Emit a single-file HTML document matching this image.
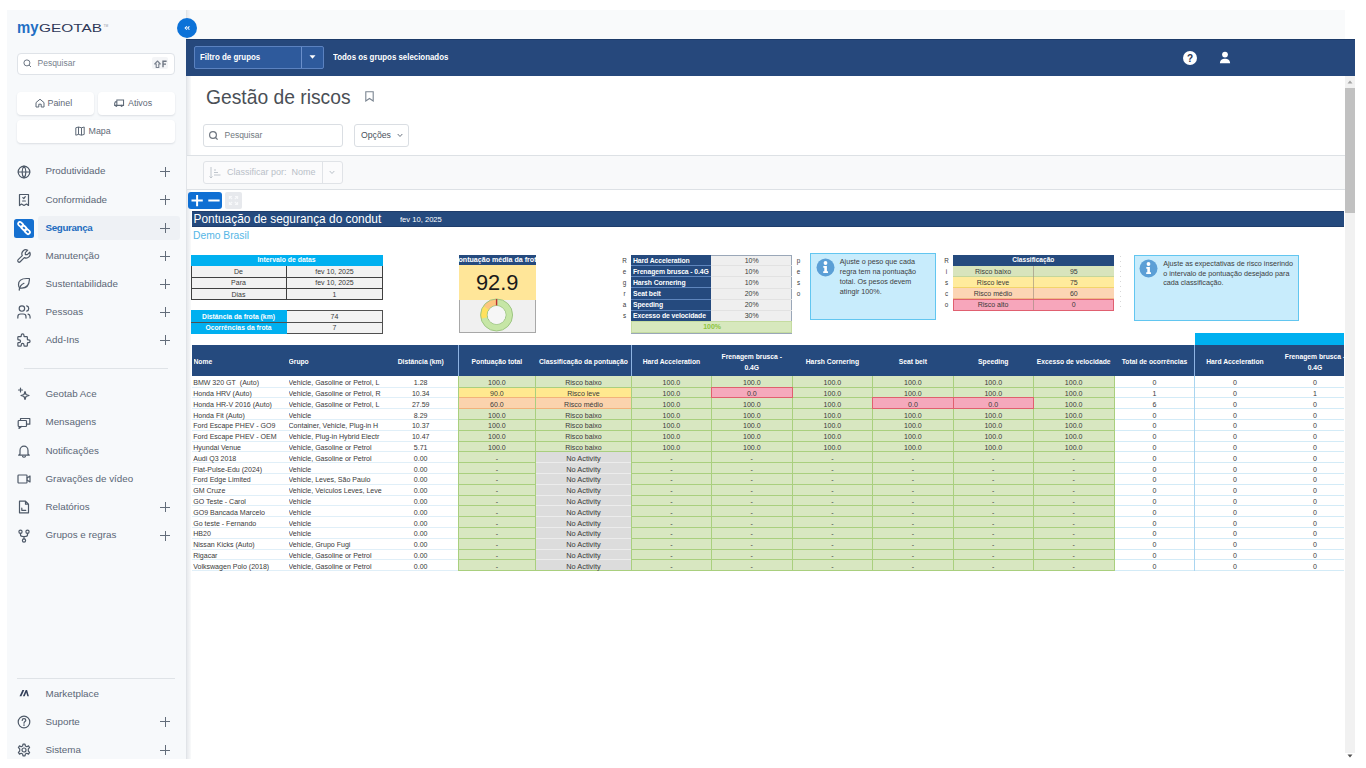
<!DOCTYPE html><html><head><meta charset="utf-8"><style>
*{box-sizing:border-box;margin:0;padding:0}
html,body{width:1366px;height:768px;overflow:hidden;background:#fff;font-family:"Liberation Sans",sans-serif}
body{position:relative}
.a{position:absolute}
.nt{position:absolute;left:45.5px;font-size:9.8px;color:#5a6676;white-space:nowrap;line-height:12px}
.pl{position:absolute;left:160px;width:10px;height:10px}
.pl:before{content:"";position:absolute;left:4.5px;top:0;width:1.1px;height:10px;background:#636d7a}
.pl:after{content:"";position:absolute;left:0;top:4.5px;width:10px;height:1.1px;background:#636d7a}
.ic{position:absolute;left:17px;width:14px;height:14px;overflow:visible}
.sbb{position:absolute;background:#fff;border-radius:4px;box-shadow:0 1px 2px rgba(40,50,70,.13);color:#5f6a78;font-size:8.9px;white-space:nowrap}
</style></head><body>
<div class="a" style="left:7px;top:10px;width:179px;height:749px;background:#f7f9fb"></div>
<div class="a" style="left:186px;top:10px;width:1px;height:749px;background:#e1e4e8"></div>
<div class="a" style="left:187px;top:10px;width:4px;height:749px;background:linear-gradient(to right,#e8eaed,#f9fafb)"></div>
<div class="a" style="left:16.8px;top:17.5px;font-size:16px;font-weight:700;color:#1f6fc4;line-height:20px;transform:scaleX(0.93);transform-origin:0 0">my</div>
<svg class="a" style="left:39px;top:21px" width="70" height="14"><text x="0" y="11.3" font-family="Liberation Sans" font-size="11.6" fill="#2e3858" textLength="63" lengthAdjust="spacingAndGlyphs">GEOTAB</text><text x="64.5" y="5.5" font-family="Liberation Sans" font-size="3.2" fill="#9096a5">TM</text></svg>
<div class="a" style="left:17px;top:52.5px;width:157.5px;height:22px;background:#fff;border:1px solid #dfe3e8;border-radius:4px"></div>
<svg class="a" style="left:23px;top:59px" width="9" height="9" viewBox="0 0 9 9"><circle cx="3.9" cy="3.9" r="3" fill="none" stroke="#6b7583" stroke-width="1"/><line x1="6.1" y1="6.1" x2="8" y2="8" stroke="#6b7583" stroke-width="1"/></svg>
<div class="a" style="left:37.5px;top:58px;font-size:8.5px;color:#77818d;line-height:11px">Pesquisar</div>
<div class="a" style="left:151.5px;top:56.5px;width:16.5px;height:12.3px;background:#f4f5f7;border-radius:2px"></div>
<svg class="a" style="left:153.5px;top:59.5px" width="14" height="9" viewBox="0 0 14 9"><path d="M3.5 1 L6.3 4 H4.8 V7.5 H2.2 V4 H0.7 Z" fill="none" stroke="#7b8390" stroke-width="1.1" stroke-linejoin="round"/><path d="M9 7.3 V1.2 H12.6 M9 4.1 H12" fill="none" stroke="#6f7783" stroke-width="1.4"/></svg>
<div class="sbb" style="left:17px;top:92px;width:77px;height:22.5px"></div>
<div class="sbb" style="left:97.5px;top:92px;width:77px;height:22.5px"></div>
<div class="sbb" style="left:17px;top:120px;width:157.5px;height:22.5px"></div>
<svg class="a" style="left:35px;top:98px" width="10" height="10" viewBox="0 0 10 10"><path d="M1 4.6 L5 1.2 L9 4.6 V9 H6.2 V6.2 H3.8 V9 H1 Z" fill="none" stroke="#5f6a78" stroke-width="1"/></svg>
<div class="a" style="left:47.5px;top:97.5px;font-size:8.9px;color:#5f6a78;line-height:11px">Painel</div>
<svg class="a" style="left:114px;top:98px" width="10.5" height="10" viewBox="0 0 11 10"><g transform="translate(11 0) scale(-1 1)"><path d="M1 1.8 H8 V7.5 H1 Z M8 3.8 H9.6 L10.3 5.4 V7.5 H8" fill="none" stroke="#5f6a78" stroke-width="1.1"/><circle cx="3" cy="8" r="1.2" fill="#5f6a78"/><circle cx="8.6" cy="8" r="1.2" fill="#5f6a78"/></g></svg>
<div class="a" style="left:128px;top:97.5px;font-size:8.9px;color:#5f6a78;line-height:11px">Ativos</div>
<svg class="a" style="left:75px;top:126px" width="10" height="10" viewBox="0 0 10 10"><path d="M0.8 1.8 L3.5 1 L6.5 1.8 L9.2 1 V8.4 L6.5 9.2 L3.5 8.4 L0.8 9.2 Z M3.5 1 V8.4 M6.5 1.8 V9.2" fill="none" stroke="#5f6a78" stroke-width="1"/></svg>
<div class="a" style="left:88.5px;top:125.5px;font-size:8.9px;color:#5f6a78;line-height:11px">Mapa</div>
<div class="nt" style="top:165.39999999999998px;color:#5a6676;font-weight:400;">Produtividade</div>
<svg class="ic" style="top:164.7px" viewBox="0 0 14 14"><circle cx="7" cy="7" r="5.8" fill="none" stroke="#4e5968" stroke-width="1.2" stroke-linecap="round" stroke-linejoin="round"/><path d="M1.2 7 H12.8 M7 1.2 C4.5 4 4.5 10 7 12.8 M7 1.2 C9.5 4 9.5 10 7 12.8" fill="none" stroke="#4e5968" stroke-width="1.2" stroke-linecap="round" stroke-linejoin="round"/></svg>
<div class="pl" style="top:166.7px"></div>
<div class="nt" style="top:193.5px;color:#5a6676;font-weight:400;">Conformidade</div>
<svg class="ic" style="top:192.8px" viewBox="0 0 14 14"><path d="M2.5 1.5 H11.5 V12.5 L9.5 11 L7 12.5 L4.5 11 L2.5 12.5 Z" fill="none" stroke="#4e5968" stroke-width="1.2" stroke-linecap="round" stroke-linejoin="round"/><path d="M5.8 4.6 L6.8 5.5 L8.3 3.7 M5.6 8 H8.4" fill="none" stroke="#4e5968" stroke-width="1.2" stroke-linecap="round" stroke-linejoin="round"/></svg>
<div class="pl" style="top:194.8px"></div>
<div class="a" style="left:37.5px;top:216.3px;width:142px;height:24px;background:#eef1f5;border-radius:3px"></div>
<div class="a" style="left:14px;top:218.8px;width:19.5px;height:19.5px;background:#1570d0;border-radius:2.5px"></div>
<div class="nt" style="top:222.0px;color:#1d6cc0;font-weight:700;letter-spacing:-0.35px;">Segurança</div>
<svg class="ic" style="top:221.3px" viewBox="0 0 14 14"><g fill="none" stroke="#fff" stroke-width="1.8"><rect x="0.8" y="1.6" width="5.6" height="3.6" rx="1.8" transform="rotate(42 3.6 3.4)"/><rect x="4.2" y="5.2" width="5.6" height="3.6" rx="1.8" transform="rotate(42 7 7)"/><rect x="7.6" y="8.8" width="5.6" height="3.6" rx="1.8" transform="rotate(42 10.4 10.6)"/></g></svg>
<div class="pl" style="top:223.3px"></div>
<div class="nt" style="top:249.7px;color:#5a6676;font-weight:400;">Manutenção</div>
<svg class="ic" style="top:249px" viewBox="0 0 14 14"><g transform="translate(-1.2 -1.2) scale(0.68)"><path d="M17 10h-3v-3l3.5 -3.5a6 6 0 0 0 -8 8l-6 6a2 2 0 0 0 3 3l6 -6a6 6 0 0 0 8 -8l-3.5 3.5" fill="none" stroke="#4e5968" stroke-width="1.75" stroke-linecap="round" stroke-linejoin="round"/></g></svg>
<div class="pl" style="top:251px"></div>
<div class="nt" style="top:277.9px;color:#5a6676;font-weight:400;">Sustentabilidade</div>
<svg class="ic" style="top:277.2px" viewBox="0 0 14 14"><g transform="translate(-1.2 -1.2) scale(0.68)"><path d="M5 21c.5 -4.5 2.5 -8 7 -10" fill="none" stroke="#4e5968" stroke-width="1.75" stroke-linecap="round" stroke-linejoin="round"/><path d="M9 18c6.218 0 10.5 -3.288 11 -12v-2h-4.014c-9 0 -11.986 4 -12 9c0 1 0 3 2 5h3z" fill="none" stroke="#4e5968" stroke-width="1.75" stroke-linecap="round" stroke-linejoin="round"/></g></svg>
<div class="pl" style="top:279.2px"></div>
<div class="nt" style="top:305.9px;color:#5a6676;font-weight:400;">Pessoas</div>
<svg class="ic" style="top:305.2px" viewBox="0 0 14 14"><g transform="translate(-1.2 -1.2) scale(0.68)"><circle cx="9" cy="7" r="4" fill="none" stroke="#4e5968" stroke-width="1.75" stroke-linecap="round" stroke-linejoin="round"/><path d="M3 21v-2a4 4 0 0 1 4 -4h4a4 4 0 0 1 4 4v2" fill="none" stroke="#4e5968" stroke-width="1.75" stroke-linecap="round" stroke-linejoin="round"/><path d="M16 3.13a4 4 0 0 1 0 7.75" fill="none" stroke="#4e5968" stroke-width="1.75" stroke-linecap="round" stroke-linejoin="round"/><path d="M21 21v-2a4 4 0 0 0 -3 -3.85" fill="none" stroke="#4e5968" stroke-width="1.75" stroke-linecap="round" stroke-linejoin="round"/></g></svg>
<div class="pl" style="top:307.2px"></div>
<div class="nt" style="top:334.09999999999997px;color:#5a6676;font-weight:400;">Add-Ins</div>
<svg class="ic" style="top:333.4px" viewBox="0 0 14 14"><g transform="translate(-1.2 -1.2) scale(0.68)"><path d="M4 7h3a1 1 0 0 0 1 -1v-1a2 2 0 0 1 4 0v1a1 1 0 0 0 1 1h3a1 1 0 0 1 1 1v3a1 1 0 0 0 1 1h1a2 2 0 0 1 0 4h-1a1 1 0 0 0 -1 1v3a1 1 0 0 1 -1 1h-3a1 1 0 0 1 -1 -1v-1a2 2 0 0 0 -4 0v1a1 1 0 0 1 -1 1h-3a1 1 0 0 1 -1 -1v-3a1 1 0 0 1 1 -1h1a2 2 0 0 0 0 -4h-1a1 1 0 0 1 -1 -1v-3a1 1 0 0 1 1 -1" fill="none" stroke="#4e5968" stroke-width="1.75" stroke-linecap="round" stroke-linejoin="round"/></g></svg>
<div class="pl" style="top:335.4px"></div>
<div class="a" style="left:24px;top:368px;width:144px;height:1px;background:#dfe3e7"></div>
<div class="nt" style="top:388.09999999999997px;color:#5a6676;font-weight:400;">Geotab Ace</div>
<svg class="ic" style="top:387.4px" viewBox="0 0 14 14"><path d="M8 4.5 L9 7.5 L12 8.5 L9 9.5 L8 12.5 L7 9.5 L4 8.5 L7 7.5 Z" fill="none" stroke="#4e5968" stroke-width="1.2" stroke-linecap="round" stroke-linejoin="round"/><path d="M3.5 1 V5 M1.5 3 H5.5" fill="none" stroke="#4e5968" stroke-width="1.2" stroke-linecap="round" stroke-linejoin="round"/></svg>
<div class="nt" style="top:416.4px;color:#5a6676;font-weight:400;">Mensagens</div>
<svg class="ic" style="top:415.7px" viewBox="0 0 14 14"><rect x="1.2" y="4.5" width="8.3" height="6" rx="0.8" fill="none" stroke="#4e5968" stroke-width="1.2" stroke-linecap="round" stroke-linejoin="round"/><path d="M3.5 4.5 V2.5 H12.8 V8.2 H9.5 M2.5 10.5 L2 12.5 L4.5 10.5" fill="none" stroke="#4e5968" stroke-width="1.2" stroke-linecap="round" stroke-linejoin="round"/></svg>
<div class="nt" style="top:444.7px;color:#5a6676;font-weight:400;">Notificações</div>
<svg class="ic" style="top:444px" viewBox="0 0 14 14"><path d="M3 10 V6.5 C3 4 4.8 2.2 7 2.2 C9.2 2.2 11 4 11 6.5 V10 L12.3 11.2 H1.7 Z M5.6 12.5 C6 13.3 8 13.3 8.4 12.5" fill="none" stroke="#4e5968" stroke-width="1.2" stroke-linecap="round" stroke-linejoin="round"/></svg>
<div class="nt" style="top:472.7px;color:#5a6676;font-weight:400;">Gravações de vídeo</div>
<svg class="ic" style="top:472px" viewBox="0 0 14 14"><rect x="1" y="3" width="9" height="8" rx="0.8" fill="none" stroke="#4e5968" stroke-width="1.2" stroke-linecap="round" stroke-linejoin="round"/><path d="M10 6 L13 4 V10 L10 8" fill="none" stroke="#4e5968" stroke-width="1.2" stroke-linecap="round" stroke-linejoin="round"/></svg>
<div class="nt" style="top:500.9px;color:#5a6676;font-weight:400;">Relatórios</div>
<svg class="ic" style="top:500.2px" viewBox="0 0 14 14"><path d="M2.5 1.2 H8.5 L11.5 4.2 V12.8 H2.5 Z M8.5 1.2 V4.2 H11.5 M4.8 8 V10.3 H8.8" fill="none" stroke="#4e5968" stroke-width="1.2" stroke-linecap="round" stroke-linejoin="round"/></svg>
<div class="pl" style="top:502.2px"></div>
<div class="nt" style="top:529.2px;color:#5a6676;font-weight:400;">Grupos e regras</div>
<svg class="ic" style="top:528.5px" viewBox="0 0 14 14"><circle cx="3.5" cy="2.8" r="1.6" fill="none" stroke="#4e5968" stroke-width="1.2" stroke-linecap="round" stroke-linejoin="round"/><circle cx="10.5" cy="2.8" r="1.6" fill="none" stroke="#4e5968" stroke-width="1.2" stroke-linecap="round" stroke-linejoin="round"/><circle cx="7" cy="11.5" r="1.6" fill="none" stroke="#4e5968" stroke-width="1.2" stroke-linecap="round" stroke-linejoin="round"/><path d="M3.5 4.4 V6 C3.5 7 4.5 7.6 7 7.6 C9.5 7.6 10.5 7 10.5 6 V4.4 M7 7.6 V9.9" fill="none" stroke="#4e5968" stroke-width="1.2" stroke-linecap="round" stroke-linejoin="round"/></svg>
<div class="pl" style="top:530.5px"></div>
<div class="a" style="left:17px;top:678px;width:158px;height:1px;background:#dfe3e7"></div>
<div class="nt" style="top:687.5px;color:#5a6676;font-weight:400;">Marketplace</div>
<svg class="ic" style="top:686.8px" viewBox="0 0 14 14"><path d="M2.5 9.3 L5.4 3.1 L7.3 3.1 L4.4 9.3 Z M5.9 9.3 L8.7 3.1 L10.1 3.1 L11.9 9.3 L10.4 9.3 L9.2 5.6 L7.7 9.3 Z" fill="#34405a"/></svg>
<div class="nt" style="top:715.5px;color:#5a6676;font-weight:400;">Suporte</div>
<svg class="ic" style="top:714.8px" viewBox="0 0 14 14"><circle cx="7" cy="7" r="5.8" fill="none" stroke="#4e5968" stroke-width="1.2" stroke-linecap="round" stroke-linejoin="round"/><path d="M5.2 5.4 C5.2 4.3 6 3.7 7 3.7 C8 3.7 8.8 4.3 8.8 5.3 C8.8 6.6 7 6.6 7 8.2" fill="none" stroke="#4e5968" stroke-width="1.2" stroke-linecap="round" stroke-linejoin="round"/><circle cx="7" cy="10.1" r="0.5" fill="#4e5968" stroke="#4e5968" stroke-width="0.6"/></svg>
<div class="pl" style="top:716.8px"></div>
<div class="nt" style="top:743.7px;color:#5a6676;font-weight:400;">Sistema</div>
<svg class="ic" style="top:743px" viewBox="0 0 14 14"><circle cx="7" cy="7" r="2" fill="none" stroke="#4e5968" stroke-width="1.2" stroke-linecap="round" stroke-linejoin="round"/><path d="M6 1.2 H8 L8.4 3 L9.8 3.7 L11.5 2.9 L12.6 4.6 L11.3 5.9 V8.1 L12.6 9.4 L11.5 11.1 L9.8 10.3 L8.4 11 L8 12.8 H6 L5.6 11 L4.2 10.3 L2.5 11.1 L1.4 9.4 L2.7 8.1 V5.9 L1.4 4.6 L2.5 2.9 L4.2 3.7 L5.6 3 Z" fill="none" stroke="#4e5968" stroke-width="1.2" stroke-linecap="round" stroke-linejoin="round"/></svg>
<div class="pl" style="top:745px"></div>
<div class="a" style="left:190px;top:10px;width:1155px;height:29px;background:#f9fafb"></div>
<div class="a" style="left:186px;top:39px;width:1169px;height:37px;background:#26487c;border-top:1.5px solid #1d3a68"></div>
<div class="a" style="left:177px;top:18px;width:20px;height:20px;border-radius:50%;background:#0c72d8"></div>
<svg class="a" style="left:182px;top:23px" width="10" height="10" viewBox="0 0 10 10"><path d="M4.9 3.4 L3.2 5 L4.9 6.6 M7.4 3.4 L5.7 5 L7.4 6.6" fill="none" stroke="#fff" stroke-width="1.1"/></svg>
<div class="a" style="left:194px;top:46px;width:129.5px;height:22.5px;background:#2e5a9c;border:1px solid #5b82c0;border-radius:2px"></div>
<div class="a" style="left:301px;top:46.5px;width:1px;height:21.5px;background:#6a8fcb"></div>
<div class="a" style="left:200px;top:52px;font-size:8.8px;color:#fff;line-height:11px;font-weight:700;transform:scaleX(0.9);transform-origin:0 0">Filtro de grupos</div>
<svg class="a" style="left:309px;top:55px" width="7" height="4" viewBox="0 0 7 4"><path d="M0.5 0.2 H6.5 L3.5 3.8 Z" fill="#fff"/></svg>
<div class="a" style="left:333px;top:52px;font-size:8.8px;color:#fff;line-height:11px;font-weight:700;transform:scaleX(0.895);transform-origin:0 0">Todos os grupos selecionados</div>
<div class="a" style="left:1183px;top:50.5px;width:14px;height:14px;border-radius:50%;background:#fff;color:#2a3550;font-size:10px;font-weight:700;text-align:center;line-height:15px">?</div>
<svg class="a" style="left:1219px;top:51px" width="12" height="13" viewBox="0 0 12 13"><circle cx="6" cy="3.6" r="2.9" fill="#fff"/><path d="M0.9 12.2 C1.2 8.9 3.2 7.8 6 7.8 C8.8 7.8 10.8 8.9 11.1 12.2 Z" fill="#fff"/></svg>
<div class="a" style="left:205.5px;top:85.5px;font-size:20.3px;color:#4a4f56;line-height:22px;transform:scaleX(0.95);transform-origin:0 0">Gestão de riscos</div>
<svg class="a" style="left:364px;top:91px" width="11" height="11" viewBox="0 0 11 11"><path d="M1.8 0.8 H9.2 V10 L5.5 7.5 L1.8 10 Z" fill="none" stroke="#7b8591" stroke-width="1.1"/></svg>
<div class="a" style="left:203px;top:124px;width:140px;height:23px;background:#fff;border:1px solid #dadee3;border-radius:3px"></div>
<svg class="a" style="left:208px;top:130px" width="11" height="11" viewBox="0 0 11 11"><circle cx="5" cy="5" r="3.4" fill="none" stroke="#6f7680" stroke-width="1.2"/><line x1="7.5" y1="7.5" x2="9.6" y2="9.6" stroke="#6f7680" stroke-width="1.3"/></svg>
<div class="a" style="left:224.5px;top:130px;font-size:8.5px;color:#717880;line-height:11px">Pesquisar</div>
<div class="a" style="left:354px;top:124px;width:55px;height:23px;background:#fff;border:1px solid #dadee3;border-radius:3px"></div>
<div class="a" style="left:361px;top:130px;font-size:8.7px;color:#4a525c;line-height:11px">Opções</div>
<svg class="a" style="left:396.5px;top:133px" width="6" height="5" viewBox="0 0 6 5"><path d="M0.7 1 L3 3.5 L5.3 1" fill="none" stroke="#6b7480" stroke-width="1"/></svg>
<div class="a" style="left:187px;top:155px;width:1158px;height:34.5px;background:#f8f9fa;border-top:1px solid #dde1e5;border-bottom:1px solid #dde1e5"></div>
<div class="a" style="left:203px;top:161px;width:140px;height:23px;background:#fbfbfc;border:1px solid #e0e3e7;border-radius:3px"></div>
<div class="a" style="left:321.5px;top:161.5px;width:1px;height:22px;background:#e0e3e7"></div>
<svg class="a" style="left:209px;top:166px" width="12" height="13" viewBox="0 0 12 13"><path d="M2 1 V12 M0.5 10.5 L2 12 L3.5 10.5 M5 4 H7 M5 6.5 H9 M5 9 H11.5" fill="none" stroke="#c0c6cd" stroke-width="1"/></svg>
<div class="a" style="left:227px;top:167px;font-size:9.0px;color:#b9c0c8;line-height:11px;white-space:pre">Classificar por:  Nome</div>
<svg class="a" style="left:329px;top:170px" width="6" height="5" viewBox="0 0 6 5"><path d="M0.7 1 L3 3.5 L5.3 1" fill="none" stroke="#b9c0c8" stroke-width="1"/></svg>
<div class="a" style="left:1344.5px;top:76px;width:10.5px;height:677px;background:#f1f1f1"></div>
<div class="a" style="left:1345px;top:88px;width:10px;height:125px;background:#c1c1c1"></div>
<svg class="a" style="left:1347px;top:80px" width="6" height="4" viewBox="0 0 6 4"><path d="M0.5 3.5 L3 0.5 L5.5 3.5 Z" fill="#a3a3a3"/></svg>
<svg class="a" style="left:1347px;top:754px" width="6" height="4" viewBox="0 0 6 4"><path d="M0.5 0.5 L3 3.5 L5.5 0.5 Z" fill="#505050"/></svg>
<div class="a" style="left:188px;top:192px;width:34px;height:17px;background:#0f6fd3;border-radius:3px"></div>
<svg class="a" style="left:188px;top:192px" width="34" height="17" viewBox="0 0 34 17"><path d="M3.5 8.6 H14.8 M9.1 3 V14.3 M20.3 8.6 H31.6" stroke="#fff" stroke-width="2"/></svg>
<div class="a" style="left:225px;top:192px;width:16.5px;height:17px;background:#e7e9ed;border-radius:2px"></div>
<svg class="a" style="left:228px;top:195px" width="11" height="11" viewBox="0 0 11 11"><path d="M1.5 4 V1.5 H4 M7 1.5 H9.5 V4 M9.5 7 V9.5 H7 M4 9.5 H1.5 V7 M2 2 L4.2 4.2 M9 2 L6.8 4.2 M9 9 L6.8 6.8 M2 9 L4.2 6.8" fill="none" stroke="#f7f8fa" stroke-width="1.2"/></svg>
<div class="a" style="left:192px;top:211px;width:1152px;height:16px;background:#254a7e;border-top:1px solid #1f3d6b;border-bottom:1px solid #1f3d6b"></div>
<div class="a" style="left:193.5px;top:211px;width:188.5px;height:16px;line-height:16px;text-align:left;white-space:nowrap;overflow:hidden;font-size:11.9px;color:#fff">Pontuação de segurança do condut</div>
<div class="a" style="left:400px;top:212px;width:60px;height:15px;line-height:15px;text-align:left;white-space:nowrap;overflow:hidden;font-size:7.6px;color:#fff">fev 10, 2025</div>
<div class="a" style="left:193px;top:229px;width:107px;height:14px;line-height:14px;text-align:left;white-space:nowrap;overflow:hidden;font-size:10.3px;color:#55b6e6">Demo Brasil</div>
<div class="a" style="left:190.5px;top:254.5px;width:192.0px;height:11.0px;background:#00b0f0"></div>
<div class="a" style="left:190.5px;top:253.7px;width:192.0px;height:11.0px;line-height:11.0px;text-align:center;white-space:nowrap;overflow:hidden;font-size:6.85px;color:#fff;font-weight:700">Intervalo de datas</div>
<div class="a" style="left:190.5px;top:265.5px;width:192.0px;height:34.30000000000001px;background:#f2f2f2;border:1px solid #404040;border-top:none"></div>
<div class="a" style="left:190.5px;top:265.5px;width:96.0px;height:11.5px;line-height:11.5px;text-align:center;white-space:nowrap;overflow:hidden;font-size:7px;color:#3a3a3a">De</div>
<div class="a" style="left:286.5px;top:265.5px;width:96.0px;height:11.5px;line-height:11.5px;text-align:center;white-space:nowrap;overflow:hidden;font-size:7px;color:#3a3a3a">fev 10, 2025</div>
<div class="a" style="left:190.5px;top:276.5px;width:192.0px;height:1.0px;background:#404040"></div>
<div class="a" style="left:190.5px;top:277px;width:96.0px;height:11.5px;line-height:11.5px;text-align:center;white-space:nowrap;overflow:hidden;font-size:7px;color:#3a3a3a">Para</div>
<div class="a" style="left:286.5px;top:277px;width:96.0px;height:11.5px;line-height:11.5px;text-align:center;white-space:nowrap;overflow:hidden;font-size:7px;color:#3a3a3a">fev 10, 2025</div>
<div class="a" style="left:190.5px;top:288.0px;width:192.0px;height:1.0px;background:#404040"></div>
<div class="a" style="left:190.5px;top:288.5px;width:96.0px;height:11.300000000000011px;line-height:11.300000000000011px;text-align:center;white-space:nowrap;overflow:hidden;font-size:7px;color:#3a3a3a">Dias</div>
<div class="a" style="left:286.5px;top:288.5px;width:96.0px;height:11.300000000000011px;line-height:11.300000000000011px;text-align:center;white-space:nowrap;overflow:hidden;font-size:7px;color:#3a3a3a">1</div>
<div class="a" style="left:286.0px;top:265.5px;width:1.0px;height:34.30000000000001px;background:#404040"></div>
<div class="a" style="left:190.5px;top:310.3px;width:192.0px;height:23.30000000000001px;background:#f2f2f2;border:1px solid #505050"></div>
<div class="a" style="left:190.5px;top:310.3px;width:96.0px;height:23.30000000000001px;background:#00b0f0"></div>
<div class="a" style="left:190.5px;top:321.6px;width:192.0px;height:1.0px;background:#505050"></div>
<div class="a" style="left:190.5px;top:310.5px;width:96.0px;height:11.300000000000011px;line-height:11.300000000000011px;text-align:center;white-space:nowrap;overflow:hidden;font-size:6.75px;color:#fff;font-weight:700">Distância da frota (km)</div>
<div class="a" style="left:190.5px;top:322.2px;width:96.0px;height:11.300000000000011px;line-height:11.300000000000011px;text-align:center;white-space:nowrap;overflow:hidden;font-size:6.75px;color:#fff;font-weight:700">Ocorrências da frota</div>
<div class="a" style="left:286.5px;top:310.5px;width:96.0px;height:11.300000000000011px;line-height:11.300000000000011px;text-align:center;white-space:nowrap;overflow:hidden;font-size:7px;color:#3a3a3a">74</div>
<div class="a" style="left:286.5px;top:322.2px;width:96.0px;height:11.300000000000011px;line-height:11.300000000000011px;text-align:center;white-space:nowrap;overflow:hidden;font-size:7px;color:#3a3a3a">7</div>
<div class="a" style="left:458.5px;top:254.5px;width:77.29999999999995px;height:78.5px;background:#f0f0f0;border:1px solid #a8a8a8"></div>
<div class="a" style="left:458.5px;top:254.5px;width:77.29999999999995px;height:10.800000000000011px;background:#254a7e"></div>
<div class="a" style="left:458.5px;top:254.5px;width:77.3px;height:10.8px;overflow:hidden"><div style="position:absolute;left:-20px;top:0.8px;width:117.3px;text-align:center;line-height:10.8px;font-size:7.1px;color:#fff;font-weight:700;white-space:nowrap">Pontuação média da frota</div></div>
<div class="a" style="left:458.5px;top:265.3px;width:77.29999999999995px;height:34.39999999999998px;background:#ffe699"></div>
<div class="a" style="left:458.5px;top:267px;width:77.29999999999995px;height:31px;line-height:31px;text-align:center;white-space:nowrap;overflow:hidden;font-size:21.8px;color:#1a1a1a">92.9</div>
<svg class="a" style="left:478px;top:296px" width="38" height="38" viewBox="0 0 38 38">
<circle cx="18.6" cy="19" r="12.7" fill="none" stroke="#c6e6a6" stroke-width="6.6"/>
<path d="M18.6 6.3 A12.7 12.7 0 0 0 8.1 11.9" fill="none" stroke="#fdc67e" stroke-width="6.6"/>
<path d="M8.1 11.9 A12.7 12.7 0 0 0 6.2 22" fill="none" stroke="#ffe15e" stroke-width="6.6"/>
<circle cx="18.6" cy="19" r="16" fill="none" stroke="#98c27e" stroke-width="0.9"/>
<circle cx="18.6" cy="19" r="9.4" fill="none" stroke="#98c27e" stroke-width="0.9"/>
<circle cx="18.6" cy="19" r="8.9" fill="#f6f6f6"/>
<path d="M18.6 3 V9.4" stroke="#b83030" stroke-width="1.4"/>
</svg>
<div class="a" style="left:619px;top:254.5px;width:11px;height:11.129999999999995px;line-height:11.129999999999995px;text-align:center;white-space:nowrap;overflow:hidden;font-size:6.3px;color:#3a3a3a">R</div>
<div class="a" style="left:619px;top:265.63px;width:11px;height:11.129999999999995px;line-height:11.129999999999995px;text-align:center;white-space:nowrap;overflow:hidden;font-size:6.3px;color:#3a3a3a">e</div>
<div class="a" style="left:619px;top:276.76px;width:11px;height:11.129999999999995px;line-height:11.129999999999995px;text-align:center;white-space:nowrap;overflow:hidden;font-size:6.3px;color:#3a3a3a">g</div>
<div class="a" style="left:619px;top:287.89px;width:11px;height:11.129999999999995px;line-height:11.129999999999995px;text-align:center;white-space:nowrap;overflow:hidden;font-size:6.3px;color:#3a3a3a">r</div>
<div class="a" style="left:619px;top:299.02px;width:11px;height:11.129999999999995px;line-height:11.129999999999995px;text-align:center;white-space:nowrap;overflow:hidden;font-size:6.3px;color:#3a3a3a">a</div>
<div class="a" style="left:619px;top:310.15px;width:11px;height:11.129999999999995px;line-height:11.129999999999995px;text-align:center;white-space:nowrap;overflow:hidden;font-size:6.3px;color:#3a3a3a">s</div>
<div class="a" style="left:631px;top:254.5px;width:161.29999999999995px;height:79.0px;background:#efefef;border:1px solid #9aa7b8"></div>
<div class="a" style="left:631px;top:254.5px;width:80px;height:11.129999999999995px;background:#254a7e"></div>
<div class="a" style="left:633px;top:254.5px;width:78px;height:11.129999999999995px;line-height:11.129999999999995px;text-align:left;white-space:nowrap;overflow:hidden;font-size:6.85px;color:#fff;font-weight:700;letter-spacing:-0.1px">Hard Acceleration</div>
<div class="a" style="left:711px;top:254.5px;width:81.29999999999995px;height:11.129999999999995px;line-height:11.129999999999995px;text-align:center;white-space:nowrap;overflow:hidden;font-size:7px;color:#3a3a3a">10%</div>
<div class="a" style="left:631px;top:265.63px;width:80px;height:11.129999999999995px;background:#254a7e"></div>
<div class="a" style="left:631px;top:265.23px;width:80px;height:1.0px;background:#5f86bd"></div>
<div class="a" style="left:711px;top:265.33px;width:81.29999999999995px;height:0.8000000000000114px;background:#e2e2e2"></div>
<div class="a" style="left:633px;top:265.63px;width:78px;height:11.129999999999995px;line-height:11.129999999999995px;text-align:left;white-space:nowrap;overflow:hidden;font-size:6.85px;color:#fff;font-weight:700;letter-spacing:-0.1px">Frenagem brusca - 0.4G</div>
<div class="a" style="left:711px;top:265.63px;width:81.29999999999995px;height:11.129999999999995px;line-height:11.129999999999995px;text-align:center;white-space:nowrap;overflow:hidden;font-size:7px;color:#3a3a3a">10%</div>
<div class="a" style="left:631px;top:276.76px;width:80px;height:11.129999999999995px;background:#254a7e"></div>
<div class="a" style="left:631px;top:276.36px;width:80px;height:1.0px;background:#5f86bd"></div>
<div class="a" style="left:711px;top:276.46px;width:81.29999999999995px;height:0.8000000000000114px;background:#e2e2e2"></div>
<div class="a" style="left:633px;top:276.76px;width:78px;height:11.129999999999995px;line-height:11.129999999999995px;text-align:left;white-space:nowrap;overflow:hidden;font-size:6.85px;color:#fff;font-weight:700;letter-spacing:-0.1px">Harsh Cornering</div>
<div class="a" style="left:711px;top:276.76px;width:81.29999999999995px;height:11.129999999999995px;line-height:11.129999999999995px;text-align:center;white-space:nowrap;overflow:hidden;font-size:7px;color:#3a3a3a">10%</div>
<div class="a" style="left:631px;top:287.89px;width:80px;height:11.129999999999995px;background:#254a7e"></div>
<div class="a" style="left:631px;top:287.49px;width:80px;height:1.0px;background:#5f86bd"></div>
<div class="a" style="left:711px;top:287.59px;width:81.29999999999995px;height:0.8000000000000114px;background:#e2e2e2"></div>
<div class="a" style="left:633px;top:287.89px;width:78px;height:11.129999999999995px;line-height:11.129999999999995px;text-align:left;white-space:nowrap;overflow:hidden;font-size:6.85px;color:#fff;font-weight:700;letter-spacing:-0.1px">Seat belt</div>
<div class="a" style="left:711px;top:287.89px;width:81.29999999999995px;height:11.129999999999995px;line-height:11.129999999999995px;text-align:center;white-space:nowrap;overflow:hidden;font-size:7px;color:#3a3a3a">20%</div>
<div class="a" style="left:631px;top:299.02px;width:80px;height:11.129999999999995px;background:#254a7e"></div>
<div class="a" style="left:631px;top:298.62px;width:80px;height:1.0px;background:#5f86bd"></div>
<div class="a" style="left:711px;top:298.71999999999997px;width:81.29999999999995px;height:0.8000000000000114px;background:#e2e2e2"></div>
<div class="a" style="left:633px;top:299.02px;width:78px;height:11.129999999999995px;line-height:11.129999999999995px;text-align:left;white-space:nowrap;overflow:hidden;font-size:6.85px;color:#fff;font-weight:700;letter-spacing:-0.1px">Speeding</div>
<div class="a" style="left:711px;top:299.02px;width:81.29999999999995px;height:11.129999999999995px;line-height:11.129999999999995px;text-align:center;white-space:nowrap;overflow:hidden;font-size:7px;color:#3a3a3a">20%</div>
<div class="a" style="left:631px;top:310.15px;width:80px;height:11.129999999999995px;background:#254a7e"></div>
<div class="a" style="left:631px;top:309.75px;width:80px;height:1.0px;background:#5f86bd"></div>
<div class="a" style="left:711px;top:309.84999999999997px;width:81.29999999999995px;height:0.8000000000000114px;background:#e2e2e2"></div>
<div class="a" style="left:633px;top:310.15px;width:78px;height:11.129999999999995px;line-height:11.129999999999995px;text-align:left;white-space:nowrap;overflow:hidden;font-size:6.85px;color:#fff;font-weight:700;letter-spacing:-0.1px">Excesso de velocidade</div>
<div class="a" style="left:711px;top:310.15px;width:81.29999999999995px;height:11.129999999999995px;line-height:11.129999999999995px;text-align:center;white-space:nowrap;overflow:hidden;font-size:7px;color:#3a3a3a">30%</div>
<div class="a" style="left:631px;top:321.3px;width:161.29999999999995px;height:12.199999999999989px;background:#d7e8bd;border:1px solid #c5dca0"></div>
<div class="a" style="left:631px;top:321.3px;width:162.29999999999995px;height:12.199999999999989px;line-height:12.199999999999989px;text-align:center;white-space:nowrap;overflow:hidden;font-size:7px;color:#8cc43c;font-weight:700">100%</div>
<div class="a" style="left:793px;top:254.5px;width:11px;height:11.129999999999995px;line-height:11.129999999999995px;text-align:center;white-space:nowrap;overflow:hidden;font-size:6.3px;color:#3a3a3a">p</div>
<div class="a" style="left:793px;top:265.63px;width:11px;height:11.129999999999995px;line-height:11.129999999999995px;text-align:center;white-space:nowrap;overflow:hidden;font-size:6.3px;color:#3a3a3a">e</div>
<div class="a" style="left:793px;top:276.76px;width:11px;height:11.129999999999995px;line-height:11.129999999999995px;text-align:center;white-space:nowrap;overflow:hidden;font-size:6.3px;color:#3a3a3a">s</div>
<div class="a" style="left:793px;top:287.89px;width:11px;height:11.129999999999995px;line-height:11.129999999999995px;text-align:center;white-space:nowrap;overflow:hidden;font-size:6.3px;color:#3a3a3a">o</div>
<div class="a" style="left:810.3px;top:253px;width:125.5px;height:67.30000000000001px;background:#c8ecfc;border:1.1px solid #62c6f0"></div>
<svg class="a" style="left:816.3px;top:257.8px" width="19" height="19" viewBox="0 0 19 19"><circle cx="9.5" cy="9.5" r="9" fill="#5b9fd6"/>
<circle cx="9.5" cy="5" r="1.9" fill="#fff"/><path d="M7.3 8 H10.9 V13.2 H12 V15 H7.2 V13.2 H8.3 V9.8 H7.3 Z" fill="#fff"/></svg>
<div class="a" style="left:839.8px;top:258.2px;font-size:7.2px;line-height:8px;color:#3c3c3c;white-space:nowrap">Ajuste o peso que cada</div>
<div class="a" style="left:839.8px;top:268.0px;font-size:7.2px;line-height:8px;color:#3c3c3c;white-space:nowrap">regra tem na pontuação</div>
<div class="a" style="left:839.8px;top:277.8px;font-size:7.2px;line-height:8px;color:#3c3c3c;white-space:nowrap">total. Os pesos devem</div>
<div class="a" style="left:839.8px;top:287.59999999999997px;font-size:7.2px;line-height:8px;color:#3c3c3c;white-space:nowrap">atingir 100%.</div>
<div class="a" style="left:941px;top:254.5px;width:11px;height:11.199999999999989px;line-height:11.199999999999989px;text-align:center;white-space:nowrap;overflow:hidden;font-size:6.3px;color:#3a3a3a">R</div>
<div class="a" style="left:941px;top:265.7px;width:11px;height:11.199999999999989px;line-height:11.199999999999989px;text-align:center;white-space:nowrap;overflow:hidden;font-size:6.3px;color:#3a3a3a">i</div>
<div class="a" style="left:941px;top:276.9px;width:11px;height:11.200000000000045px;line-height:11.200000000000045px;text-align:center;white-space:nowrap;overflow:hidden;font-size:6.3px;color:#3a3a3a">s</div>
<div class="a" style="left:941px;top:288.1px;width:11px;height:11.199999999999989px;line-height:11.199999999999989px;text-align:center;white-space:nowrap;overflow:hidden;font-size:6.3px;color:#3a3a3a">c</div>
<div class="a" style="left:941px;top:299.3px;width:11px;height:11.199999999999989px;line-height:11.199999999999989px;text-align:center;white-space:nowrap;overflow:hidden;font-size:6.3px;color:#3a3a3a">o</div>
<div class="a" style="left:952.5px;top:254.5px;width:161.5999999999999px;height:11.100000000000023px;background:#254a7e"></div>
<div class="a" style="left:952.5px;top:253.7px;width:161.5999999999999px;height:11.100000000000023px;line-height:11.100000000000023px;text-align:center;white-space:nowrap;overflow:hidden;font-size:6.6px;color:#fff;font-weight:700">Classificação</div>
<div class="a" style="left:952.5px;top:265.6px;width:161.5999999999999px;height:11.099999999999966px;background:#d8e4bc;border-bottom:1px solid #c3d69b"></div>
<div class="a" style="left:952.5px;top:265.6px;width:81.0px;height:11.099999999999966px;line-height:11.099999999999966px;text-align:center;white-space:nowrap;overflow:hidden;font-size:7px;color:#3a3a3a">Risco baixo</div>
<div class="a" style="left:1033.5px;top:265.6px;width:80.59999999999991px;height:11.099999999999966px;line-height:11.099999999999966px;text-align:center;white-space:nowrap;overflow:hidden;font-size:7px;color:#3a3a3a">95</div>
<div class="a" style="left:952.5px;top:276.7px;width:161.5999999999999px;height:11.100000000000023px;background:#ffeb9c;border-bottom:1px solid #f3d46a"></div>
<div class="a" style="left:952.5px;top:276.7px;width:81.0px;height:11.100000000000023px;line-height:11.100000000000023px;text-align:center;white-space:nowrap;overflow:hidden;font-size:7px;color:#3a3a3a">Risco leve</div>
<div class="a" style="left:1033.5px;top:276.7px;width:80.59999999999991px;height:11.100000000000023px;line-height:11.100000000000023px;text-align:center;white-space:nowrap;overflow:hidden;font-size:7px;color:#3a3a3a">75</div>
<div class="a" style="left:952.5px;top:287.8px;width:161.5999999999999px;height:11.199999999999989px;background:#fcd5b4;border-bottom:1px solid #f1b886"></div>
<div class="a" style="left:952.5px;top:287.8px;width:81.0px;height:11.199999999999989px;line-height:11.199999999999989px;text-align:center;white-space:nowrap;overflow:hidden;font-size:7px;color:#3a3a3a">Risco médio</div>
<div class="a" style="left:1033.5px;top:287.8px;width:80.59999999999991px;height:11.199999999999989px;line-height:11.199999999999989px;text-align:center;white-space:nowrap;overflow:hidden;font-size:7px;color:#3a3a3a">60</div>
<div class="a" style="left:952.5px;top:299px;width:161.5999999999999px;height:11.600000000000023px;background:#f7a6bb;border-bottom:1px solid #e06070"></div>
<div class="a" style="left:952.5px;top:299px;width:81.0px;height:11.600000000000023px;line-height:11.600000000000023px;text-align:center;white-space:nowrap;overflow:hidden;font-size:7px;color:#3a3a3a">Risco alto</div>
<div class="a" style="left:1033.5px;top:299px;width:80.59999999999991px;height:11.600000000000023px;line-height:11.600000000000023px;text-align:center;white-space:nowrap;overflow:hidden;font-size:7px;color:#3a3a3a">0</div>
<div class="a" style="left:1033.1px;top:265.6px;width:1.0px;height:45.0px;background:#9a8a7a;opacity:.6"></div>
<div class="a" style="left:952.5px;top:299px;width:161.5999999999999px;height:11.600000000000023px;border:1px solid #e06070"></div>
<div class="a" style="left:1119.5px;top:256px;width:1.5px;height:1.3000000000000114px;background:#b8b8b8;border-radius:50%"></div>
<div class="a" style="left:1119.5px;top:261px;width:1.5px;height:1.3000000000000114px;background:#b8b8b8;border-radius:50%"></div>
<div class="a" style="left:1119.5px;top:266px;width:1.5px;height:1.3000000000000114px;background:#b8b8b8;border-radius:50%"></div>
<div class="a" style="left:1119.5px;top:271px;width:1.5px;height:1.3000000000000114px;background:#b8b8b8;border-radius:50%"></div>
<div class="a" style="left:1119.5px;top:276px;width:1.5px;height:1.3000000000000114px;background:#b8b8b8;border-radius:50%"></div>
<div class="a" style="left:1119.5px;top:281px;width:1.5px;height:1.3000000000000114px;background:#b8b8b8;border-radius:50%"></div>
<div class="a" style="left:1119.5px;top:286px;width:1.5px;height:1.3000000000000114px;background:#b8b8b8;border-radius:50%"></div>
<div class="a" style="left:1119.5px;top:291px;width:1.5px;height:1.3000000000000114px;background:#b8b8b8;border-radius:50%"></div>
<div class="a" style="left:1119.5px;top:296px;width:1.5px;height:1.3000000000000114px;background:#b8b8b8;border-radius:50%"></div>
<div class="a" style="left:1119.5px;top:301px;width:1.5px;height:1.3000000000000114px;background:#b8b8b8;border-radius:50%"></div>
<div class="a" style="left:1119.5px;top:306px;width:1.5px;height:1.3000000000000114px;background:#b8b8b8;border-radius:50%"></div>
<div class="a" style="left:1134.2px;top:255px;width:165.20000000000005px;height:66.10000000000002px;background:#c8ecfc;border:1.1px solid #62c6f0"></div>
<svg class="a" style="left:1139.0px;top:258.5px" width="19" height="19" viewBox="0 0 19 19"><circle cx="9.5" cy="9.5" r="9" fill="#5b9fd6"/>
<circle cx="9.5" cy="5" r="1.9" fill="#fff"/><path d="M7.3 8 H10.9 V13.2 H12 V15 H7.2 V13.2 H8.3 V9.8 H7.3 Z" fill="#fff"/></svg>
<div class="a" style="left:1163.2px;top:260.2px;font-size:7.2px;line-height:8px;color:#3c3c3c;white-space:nowrap">Ajuste as expectativas de risco inserindo</div>
<div class="a" style="left:1163.2px;top:269.7px;font-size:7.2px;line-height:8px;color:#3c3c3c;white-space:nowrap">o intervalo de pontuação desejado para</div>
<div class="a" style="left:1163.2px;top:279.2px;font-size:7.2px;line-height:8px;color:#3c3c3c;white-space:nowrap">cada classificação.</div>
<div class="a" style="left:1194.8px;top:333.3px;width:149.20000000000005px;height:11.300000000000011px;background:#00b0f0"></div>
<div class="a" style="left:192px;top:345px;width:1152px;height:31.19999999999999px;background:#254a7e"></div>
<div class="a" style="left:193.5px;top:346px;width:94.5px;height:31.19999999999999px;display:flex;align-items:center;justify-content:flex-start;text-align:left;font-size:6.75px;line-height:11px;color:#fff;font-weight:700;white-space:nowrap;overflow:hidden">Nome</div>
<div class="a" style="left:288.5px;top:346px;width:94.5px;height:31.19999999999999px;display:flex;align-items:center;justify-content:flex-start;text-align:left;font-size:6.75px;line-height:11px;color:#fff;font-weight:700;white-space:nowrap;overflow:hidden">Grupo</div>
<div class="a" style="left:383px;top:346px;width:75.39999999999998px;height:31.19999999999999px;display:flex;align-items:center;justify-content:center;text-align:center;font-size:6.75px;line-height:11px;color:#fff;font-weight:700;white-space:nowrap;overflow:hidden">Distância (km)</div>
<div class="a" style="left:458.4px;top:346px;width:77.10000000000002px;height:31.19999999999999px;display:flex;align-items:center;justify-content:center;text-align:center;font-size:6.75px;line-height:11px;color:#fff;font-weight:700;white-space:nowrap;overflow:hidden">Pontuação total</div>
<div class="a" style="left:535.5px;top:346px;width:95.89999999999998px;height:31.19999999999999px;display:flex;align-items:center;justify-content:center;text-align:center;font-size:6.75px;line-height:11px;color:#fff;font-weight:700;white-space:nowrap;overflow:hidden">Classificação da pontuação</div>
<div class="a" style="left:631.4px;top:346px;width:80.0px;height:31.19999999999999px;display:flex;align-items:center;justify-content:center;text-align:center;font-size:6.75px;line-height:11px;color:#fff;font-weight:700;white-space:nowrap;overflow:hidden">Hard Acceleration</div>
<div class="a" style="left:711.4px;top:346px;width:80.80000000000007px;height:31.19999999999999px;display:flex;align-items:center;justify-content:center;text-align:center;font-size:6.75px;line-height:11px;color:#fff;font-weight:700;white-space:nowrap;overflow:hidden">Frenagem brusca -<br>0.4G</div>
<div class="a" style="left:792.2px;top:346px;width:80.39999999999998px;height:31.19999999999999px;display:flex;align-items:center;justify-content:center;text-align:center;font-size:6.75px;line-height:11px;color:#fff;font-weight:700;white-space:nowrap;overflow:hidden">Harsh Cornering</div>
<div class="a" style="left:872.6px;top:346px;width:80.69999999999993px;height:31.19999999999999px;display:flex;align-items:center;justify-content:center;text-align:center;font-size:6.75px;line-height:11px;color:#fff;font-weight:700;white-space:nowrap;overflow:hidden">Seat belt</div>
<div class="a" style="left:953.3px;top:346px;width:79.90000000000009px;height:31.19999999999999px;display:flex;align-items:center;justify-content:center;text-align:center;font-size:6.75px;line-height:11px;color:#fff;font-weight:700;white-space:nowrap;overflow:hidden">Speeding</div>
<div class="a" style="left:1033.2px;top:346px;width:80.89999999999986px;height:31.19999999999999px;display:flex;align-items:center;justify-content:center;text-align:center;font-size:6.75px;line-height:11px;color:#fff;font-weight:700;white-space:nowrap;overflow:hidden">Excesso de velocidade</div>
<div class="a" style="left:1114.1px;top:346px;width:80.70000000000005px;height:31.19999999999999px;display:flex;align-items:center;justify-content:center;text-align:center;font-size:6.75px;line-height:11px;color:#fff;font-weight:700;white-space:nowrap;overflow:hidden">Total de ocorrências</div>
<div class="a" style="left:1194.8px;top:346px;width:80.20000000000005px;height:31.19999999999999px;display:flex;align-items:center;justify-content:center;text-align:center;font-size:6.75px;line-height:11px;color:#fff;font-weight:700;white-space:nowrap;overflow:hidden">Hard Acceleration</div>
<div class="a" style="left:1275px;top:346px;width:80px;height:31.19999999999999px;display:flex;align-items:center;justify-content:center;text-align:center;font-size:6.75px;line-height:11px;color:#fff;font-weight:700;white-space:nowrap;overflow:hidden">Frenagem brusca -<br>0.4G</div>
<div class="a" style="left:457.9px;top:345px;width:1.1999999999999886px;height:31.19999999999999px;background:#8fb4e3"></div>
<div class="a" style="left:630.9px;top:345px;width:1.2000000000000455px;height:31.19999999999999px;background:#8fb4e3"></div>
<div class="a" style="left:1194.3px;top:345px;width:1.2000000000000455px;height:31.19999999999999px;background:#8fb4e3"></div>
<div class="a" style="left:458.4px;top:376.2px;width:655.6999999999999px;height:194.40000000000003px;background:#d8e7c1"></div>
<div class="a" style="left:458.4px;top:387.0px;width:173.0px;height:10.800000000000011px;background:#ffe88f"></div>
<div class="a" style="left:458.4px;top:397.8px;width:173.0px;height:10.800000000000011px;background:#fbd3ad"></div>
<div class="a" style="left:535.5px;top:451.8px;width:95.89999999999998px;height:10.800000000000011px;background:#dcdcdc"></div>
<div class="a" style="left:535.5px;top:462.6px;width:95.89999999999998px;height:10.800000000000011px;background:#dcdcdc"></div>
<div class="a" style="left:535.5px;top:473.4px;width:95.89999999999998px;height:10.800000000000011px;background:#dcdcdc"></div>
<div class="a" style="left:535.5px;top:484.2px;width:95.89999999999998px;height:10.800000000000011px;background:#dcdcdc"></div>
<div class="a" style="left:535.5px;top:495.0px;width:95.89999999999998px;height:10.800000000000011px;background:#dcdcdc"></div>
<div class="a" style="left:535.5px;top:505.8px;width:95.89999999999998px;height:10.800000000000011px;background:#dcdcdc"></div>
<div class="a" style="left:535.5px;top:516.6px;width:95.89999999999998px;height:10.799999999999955px;background:#dcdcdc"></div>
<div class="a" style="left:535.5px;top:527.4px;width:95.89999999999998px;height:10.799999999999955px;background:#dcdcdc"></div>
<div class="a" style="left:535.5px;top:538.2px;width:95.89999999999998px;height:10.799999999999955px;background:#dcdcdc"></div>
<div class="a" style="left:535.5px;top:549.0px;width:95.89999999999998px;height:10.799999999999955px;background:#dcdcdc"></div>
<div class="a" style="left:535.5px;top:559.8px;width:95.89999999999998px;height:10.799999999999955px;background:#dcdcdc"></div>
<div class="a" style="left:192px;top:386.5px;width:266.4px;height:1.0px;background:#e0eff8"></div>
<div class="a" style="left:1114.1px;top:386.5px;width:229.9000000000001px;height:1.0px;background:#d3ebf7"></div>
<div class="a" style="left:458.4px;top:386.5px;width:77.10000000000002px;height:1.0px;background:#a9cf7e"></div>
<div class="a" style="left:535.5px;top:386.5px;width:95.89999999999998px;height:1.0px;background:#a9cf7e"></div>
<div class="a" style="left:631.4px;top:386.5px;width:482.69999999999993px;height:1.0px;background:#a9cf7e"></div>
<div class="a" style="left:192px;top:397.3px;width:266.4px;height:1.0px;background:#e0eff8"></div>
<div class="a" style="left:1114.1px;top:397.3px;width:229.9000000000001px;height:1.0px;background:#d3ebf7"></div>
<div class="a" style="left:458.4px;top:397.3px;width:77.10000000000002px;height:1.0px;background:#a9cf7e"></div>
<div class="a" style="left:535.5px;top:397.3px;width:95.89999999999998px;height:1.0px;background:#a9cf7e"></div>
<div class="a" style="left:631.4px;top:397.3px;width:482.69999999999993px;height:1.0px;background:#a9cf7e"></div>
<div class="a" style="left:192px;top:408.1px;width:266.4px;height:1.0px;background:#e0eff8"></div>
<div class="a" style="left:1114.1px;top:408.1px;width:229.9000000000001px;height:1.0px;background:#d3ebf7"></div>
<div class="a" style="left:458.4px;top:408.1px;width:77.10000000000002px;height:1.0px;background:#a9cf7e"></div>
<div class="a" style="left:535.5px;top:408.1px;width:95.89999999999998px;height:1.0px;background:#a9cf7e"></div>
<div class="a" style="left:631.4px;top:408.1px;width:482.69999999999993px;height:1.0px;background:#a9cf7e"></div>
<div class="a" style="left:192px;top:418.9px;width:266.4px;height:1.0px;background:#e0eff8"></div>
<div class="a" style="left:1114.1px;top:418.9px;width:229.9000000000001px;height:1.0px;background:#d3ebf7"></div>
<div class="a" style="left:458.4px;top:418.9px;width:77.10000000000002px;height:1.0px;background:#a9cf7e"></div>
<div class="a" style="left:535.5px;top:418.9px;width:95.89999999999998px;height:1.0px;background:#a9cf7e"></div>
<div class="a" style="left:631.4px;top:418.9px;width:482.69999999999993px;height:1.0px;background:#a9cf7e"></div>
<div class="a" style="left:192px;top:429.7px;width:266.4px;height:1.0px;background:#e0eff8"></div>
<div class="a" style="left:1114.1px;top:429.7px;width:229.9000000000001px;height:1.0px;background:#d3ebf7"></div>
<div class="a" style="left:458.4px;top:429.7px;width:77.10000000000002px;height:1.0px;background:#a9cf7e"></div>
<div class="a" style="left:535.5px;top:429.7px;width:95.89999999999998px;height:1.0px;background:#a9cf7e"></div>
<div class="a" style="left:631.4px;top:429.7px;width:482.69999999999993px;height:1.0px;background:#a9cf7e"></div>
<div class="a" style="left:192px;top:440.5px;width:266.4px;height:1.0px;background:#e0eff8"></div>
<div class="a" style="left:1114.1px;top:440.5px;width:229.9000000000001px;height:1.0px;background:#d3ebf7"></div>
<div class="a" style="left:458.4px;top:440.5px;width:77.10000000000002px;height:1.0px;background:#a9cf7e"></div>
<div class="a" style="left:535.5px;top:440.5px;width:95.89999999999998px;height:1.0px;background:#a9cf7e"></div>
<div class="a" style="left:631.4px;top:440.5px;width:482.69999999999993px;height:1.0px;background:#a9cf7e"></div>
<div class="a" style="left:192px;top:451.3px;width:266.4px;height:1.0px;background:#e0eff8"></div>
<div class="a" style="left:1114.1px;top:451.3px;width:229.9000000000001px;height:1.0px;background:#d3ebf7"></div>
<div class="a" style="left:458.4px;top:451.3px;width:77.10000000000002px;height:1.0px;background:#a9cf7e"></div>
<div class="a" style="left:535.5px;top:451.3px;width:95.89999999999998px;height:1.0px;background:#a9cf7e"></div>
<div class="a" style="left:631.4px;top:451.3px;width:482.69999999999993px;height:1.0px;background:#a9cf7e"></div>
<div class="a" style="left:192px;top:462.1px;width:266.4px;height:1.0px;background:#e0eff8"></div>
<div class="a" style="left:1114.1px;top:462.1px;width:229.9000000000001px;height:1.0px;background:#d3ebf7"></div>
<div class="a" style="left:458.4px;top:462.1px;width:77.10000000000002px;height:1.0px;background:#a9cf7e"></div>
<div class="a" style="left:535.5px;top:462.1px;width:95.89999999999998px;height:1.0px;background:#ececec"></div>
<div class="a" style="left:631.4px;top:462.1px;width:482.69999999999993px;height:1.0px;background:#a9cf7e"></div>
<div class="a" style="left:192px;top:472.9px;width:266.4px;height:1.0px;background:#e0eff8"></div>
<div class="a" style="left:1114.1px;top:472.9px;width:229.9000000000001px;height:1.0px;background:#d3ebf7"></div>
<div class="a" style="left:458.4px;top:472.9px;width:77.10000000000002px;height:1.0px;background:#a9cf7e"></div>
<div class="a" style="left:535.5px;top:472.9px;width:95.89999999999998px;height:1.0px;background:#ececec"></div>
<div class="a" style="left:631.4px;top:472.9px;width:482.69999999999993px;height:1.0px;background:#a9cf7e"></div>
<div class="a" style="left:192px;top:483.7px;width:266.4px;height:1.0px;background:#e0eff8"></div>
<div class="a" style="left:1114.1px;top:483.7px;width:229.9000000000001px;height:1.0px;background:#d3ebf7"></div>
<div class="a" style="left:458.4px;top:483.7px;width:77.10000000000002px;height:1.0px;background:#a9cf7e"></div>
<div class="a" style="left:535.5px;top:483.7px;width:95.89999999999998px;height:1.0px;background:#ececec"></div>
<div class="a" style="left:631.4px;top:483.7px;width:482.69999999999993px;height:1.0px;background:#a9cf7e"></div>
<div class="a" style="left:192px;top:494.5px;width:266.4px;height:1.0px;background:#e0eff8"></div>
<div class="a" style="left:1114.1px;top:494.5px;width:229.9000000000001px;height:1.0px;background:#d3ebf7"></div>
<div class="a" style="left:458.4px;top:494.5px;width:77.10000000000002px;height:1.0px;background:#a9cf7e"></div>
<div class="a" style="left:535.5px;top:494.5px;width:95.89999999999998px;height:1.0px;background:#ececec"></div>
<div class="a" style="left:631.4px;top:494.5px;width:482.69999999999993px;height:1.0px;background:#a9cf7e"></div>
<div class="a" style="left:192px;top:505.3px;width:266.4px;height:1.0px;background:#e0eff8"></div>
<div class="a" style="left:1114.1px;top:505.3px;width:229.9000000000001px;height:1.0px;background:#d3ebf7"></div>
<div class="a" style="left:458.4px;top:505.3px;width:77.10000000000002px;height:1.0px;background:#a9cf7e"></div>
<div class="a" style="left:535.5px;top:505.3px;width:95.89999999999998px;height:1.0px;background:#ececec"></div>
<div class="a" style="left:631.4px;top:505.3px;width:482.69999999999993px;height:1.0px;background:#a9cf7e"></div>
<div class="a" style="left:192px;top:516.1px;width:266.4px;height:1.0px;background:#e0eff8"></div>
<div class="a" style="left:1114.1px;top:516.1px;width:229.9000000000001px;height:1.0px;background:#d3ebf7"></div>
<div class="a" style="left:458.4px;top:516.1px;width:77.10000000000002px;height:1.0px;background:#a9cf7e"></div>
<div class="a" style="left:535.5px;top:516.1px;width:95.89999999999998px;height:1.0px;background:#ececec"></div>
<div class="a" style="left:631.4px;top:516.1px;width:482.69999999999993px;height:1.0px;background:#a9cf7e"></div>
<div class="a" style="left:192px;top:526.9px;width:266.4px;height:1.0px;background:#e0eff8"></div>
<div class="a" style="left:1114.1px;top:526.9px;width:229.9000000000001px;height:1.0px;background:#d3ebf7"></div>
<div class="a" style="left:458.4px;top:526.9px;width:77.10000000000002px;height:1.0px;background:#a9cf7e"></div>
<div class="a" style="left:535.5px;top:526.9px;width:95.89999999999998px;height:1.0px;background:#ececec"></div>
<div class="a" style="left:631.4px;top:526.9px;width:482.69999999999993px;height:1.0px;background:#a9cf7e"></div>
<div class="a" style="left:192px;top:537.7px;width:266.4px;height:1.0px;background:#e0eff8"></div>
<div class="a" style="left:1114.1px;top:537.7px;width:229.9000000000001px;height:1.0px;background:#d3ebf7"></div>
<div class="a" style="left:458.4px;top:537.7px;width:77.10000000000002px;height:1.0px;background:#a9cf7e"></div>
<div class="a" style="left:535.5px;top:537.7px;width:95.89999999999998px;height:1.0px;background:#ececec"></div>
<div class="a" style="left:631.4px;top:537.7px;width:482.69999999999993px;height:1.0px;background:#a9cf7e"></div>
<div class="a" style="left:192px;top:548.5px;width:266.4px;height:1.0px;background:#e0eff8"></div>
<div class="a" style="left:1114.1px;top:548.5px;width:229.9000000000001px;height:1.0px;background:#d3ebf7"></div>
<div class="a" style="left:458.4px;top:548.5px;width:77.10000000000002px;height:1.0px;background:#a9cf7e"></div>
<div class="a" style="left:535.5px;top:548.5px;width:95.89999999999998px;height:1.0px;background:#ececec"></div>
<div class="a" style="left:631.4px;top:548.5px;width:482.69999999999993px;height:1.0px;background:#a9cf7e"></div>
<div class="a" style="left:192px;top:559.3px;width:266.4px;height:1.0px;background:#e0eff8"></div>
<div class="a" style="left:1114.1px;top:559.3px;width:229.9000000000001px;height:1.0px;background:#d3ebf7"></div>
<div class="a" style="left:458.4px;top:559.3px;width:77.10000000000002px;height:1.0px;background:#a9cf7e"></div>
<div class="a" style="left:535.5px;top:559.3px;width:95.89999999999998px;height:1.0px;background:#ececec"></div>
<div class="a" style="left:631.4px;top:559.3px;width:482.69999999999993px;height:1.0px;background:#a9cf7e"></div>
<div class="a" style="left:192px;top:570.1px;width:266.4px;height:1.0px;background:#e0eff8"></div>
<div class="a" style="left:1114.1px;top:570.1px;width:229.9000000000001px;height:1.0px;background:#d3ebf7"></div>
<div class="a" style="left:458.4px;top:570.1px;width:77.10000000000002px;height:1.0px;background:#a9cf7e"></div>
<div class="a" style="left:535.5px;top:570.1px;width:95.89999999999998px;height:1.0px;background:#a9cf7e"></div>
<div class="a" style="left:631.4px;top:570.1px;width:482.69999999999993px;height:1.0px;background:#a9cf7e"></div>
<div class="a" style="left:458.4px;top:397.3px;width:173.0px;height:1.0px;background:#f2b27a"></div>
<div class="a" style="left:458.4px;top:397.3px;width:173.0px;height:11.800000000000011px;border-top:1px solid #f2b27a;border-bottom:1px solid #f2b27a"></div>
<div class="a" style="left:457.9px;top:376.2px;width:1.1000000000000227px;height:194.40000000000003px;background:#a9cf7e"></div>
<div class="a" style="left:535.0px;top:376.2px;width:1.1000000000000227px;height:194.40000000000003px;background:#a9cf7e"></div>
<div class="a" style="left:630.9px;top:376.2px;width:1.1000000000000227px;height:194.40000000000003px;background:#a9cf7e"></div>
<div class="a" style="left:710.9px;top:376.2px;width:1.1000000000000227px;height:194.40000000000003px;background:#a9cf7e"></div>
<div class="a" style="left:791.7px;top:376.2px;width:1.1000000000000227px;height:194.40000000000003px;background:#a9cf7e"></div>
<div class="a" style="left:872.1px;top:376.2px;width:1.1000000000000227px;height:194.40000000000003px;background:#a9cf7e"></div>
<div class="a" style="left:952.8px;top:376.2px;width:1.1000000000000227px;height:194.40000000000003px;background:#a9cf7e"></div>
<div class="a" style="left:1032.7px;top:376.2px;width:1.099999999999909px;height:194.40000000000003px;background:#a9cf7e"></div>
<div class="a" style="left:1113.6px;top:376.2px;width:1.099999999999909px;height:194.40000000000003px;background:#a9cf7e"></div>
<div class="a" style="left:710.9px;top:386.5px;width:81.80000000000007px;height:11.800000000000011px;background:#f5a9bc;border:1px solid #e0606e"></div>
<div class="a" style="left:872.1px;top:397.3px;width:81.69999999999993px;height:11.800000000000011px;background:#f5a9bc;border:1px solid #e0606e"></div>
<div class="a" style="left:952.8px;top:397.3px;width:80.90000000000009px;height:11.800000000000011px;background:#f5a9bc;border:1px solid #e0606e"></div>
<div class="a" style="left:1194.3px;top:376.2px;width:1.0px;height:194.40000000000003px;background:#a9d5f0"></div>
<div class="a" style="left:193.2px;top:378.2px;width:94.80000000000001px;height:10.800000000000011px;line-height:10.800000000000011px;text-align:left;white-space:nowrap;overflow:hidden;font-size:7.05px;color:#3a3a3a">BMW 320 GT&nbsp; (Auto)</div>
<div class="a" style="left:288.5px;top:378.2px;width:93.5px;height:10.800000000000011px;line-height:10.800000000000011px;text-align:left;white-space:nowrap;overflow:hidden;font-size:7.05px;color:#3a3a3a">Vehicle, Gasoline or Petrol, L</div>
<div class="a" style="left:383px;top:378.2px;width:75.39999999999998px;height:10.800000000000011px;line-height:10.800000000000011px;text-align:center;white-space:nowrap;overflow:hidden;font-size:7.05px;color:#3a3a3a">1.28</div>
<div class="a" style="left:458.4px;top:378.2px;width:77.10000000000002px;height:10.800000000000011px;line-height:10.800000000000011px;text-align:center;white-space:nowrap;overflow:hidden;font-size:7.05px;color:#3a3a3a">100.0</div>
<div class="a" style="left:535.5px;top:378.2px;width:95.89999999999998px;height:10.800000000000011px;line-height:10.800000000000011px;text-align:center;white-space:nowrap;overflow:hidden;font-size:7.05px;color:#3a3a3a">Risco baixo</div>
<div class="a" style="left:631.4px;top:378.2px;width:80.0px;height:10.800000000000011px;line-height:10.800000000000011px;text-align:center;white-space:nowrap;overflow:hidden;font-size:7.05px;color:#3a3a3a">100.0</div>
<div class="a" style="left:711.4px;top:378.2px;width:80.80000000000007px;height:10.800000000000011px;line-height:10.800000000000011px;text-align:center;white-space:nowrap;overflow:hidden;font-size:7.05px;color:#3a3a3a">100.0</div>
<div class="a" style="left:792.2px;top:378.2px;width:80.39999999999998px;height:10.800000000000011px;line-height:10.800000000000011px;text-align:center;white-space:nowrap;overflow:hidden;font-size:7.05px;color:#3a3a3a">100.0</div>
<div class="a" style="left:872.6px;top:378.2px;width:80.69999999999993px;height:10.800000000000011px;line-height:10.800000000000011px;text-align:center;white-space:nowrap;overflow:hidden;font-size:7.05px;color:#3a3a3a">100.0</div>
<div class="a" style="left:953.3px;top:378.2px;width:79.90000000000009px;height:10.800000000000011px;line-height:10.800000000000011px;text-align:center;white-space:nowrap;overflow:hidden;font-size:7.05px;color:#3a3a3a">100.0</div>
<div class="a" style="left:1033.2px;top:378.2px;width:80.89999999999986px;height:10.800000000000011px;line-height:10.800000000000011px;text-align:center;white-space:nowrap;overflow:hidden;font-size:7.05px;color:#3a3a3a">100.0</div>
<div class="a" style="left:1114.1px;top:378.2px;width:80.70000000000005px;height:10.800000000000011px;line-height:10.800000000000011px;text-align:center;white-space:nowrap;overflow:hidden;font-size:7.05px;color:#3a3a3a">0</div>
<div class="a" style="left:1194.8px;top:378.2px;width:80.20000000000005px;height:10.800000000000011px;line-height:10.800000000000011px;text-align:center;white-space:nowrap;overflow:hidden;font-size:7.05px;color:#3a3a3a">0</div>
<div class="a" style="left:1275px;top:378.2px;width:80px;height:10.800000000000011px;line-height:10.800000000000011px;text-align:center;white-space:nowrap;overflow:hidden;font-size:7.05px;color:#3a3a3a">0</div>
<div class="a" style="left:193.2px;top:389.0px;width:94.80000000000001px;height:10.800000000000011px;line-height:10.800000000000011px;text-align:left;white-space:nowrap;overflow:hidden;font-size:7.05px;color:#3a3a3a">Honda HRV (Auto)</div>
<div class="a" style="left:288.5px;top:389.0px;width:93.5px;height:10.800000000000011px;line-height:10.800000000000011px;text-align:left;white-space:nowrap;overflow:hidden;font-size:7.05px;color:#3a3a3a">Vehicle, Gasoline or Petrol, R</div>
<div class="a" style="left:383px;top:389.0px;width:75.39999999999998px;height:10.800000000000011px;line-height:10.800000000000011px;text-align:center;white-space:nowrap;overflow:hidden;font-size:7.05px;color:#3a3a3a">10.34</div>
<div class="a" style="left:458.4px;top:389.0px;width:77.10000000000002px;height:10.800000000000011px;line-height:10.800000000000011px;text-align:center;white-space:nowrap;overflow:hidden;font-size:7.05px;color:#3a3a3a">90.0</div>
<div class="a" style="left:535.5px;top:389.0px;width:95.89999999999998px;height:10.800000000000011px;line-height:10.800000000000011px;text-align:center;white-space:nowrap;overflow:hidden;font-size:7.05px;color:#3a3a3a">Risco leve</div>
<div class="a" style="left:631.4px;top:389.0px;width:80.0px;height:10.800000000000011px;line-height:10.800000000000011px;text-align:center;white-space:nowrap;overflow:hidden;font-size:7.05px;color:#3a3a3a">100.0</div>
<div class="a" style="left:711.4px;top:389.0px;width:80.80000000000007px;height:10.800000000000011px;line-height:10.800000000000011px;text-align:center;white-space:nowrap;overflow:hidden;font-size:7.05px;color:#3a3a3a">0.0</div>
<div class="a" style="left:792.2px;top:389.0px;width:80.39999999999998px;height:10.800000000000011px;line-height:10.800000000000011px;text-align:center;white-space:nowrap;overflow:hidden;font-size:7.05px;color:#3a3a3a">100.0</div>
<div class="a" style="left:872.6px;top:389.0px;width:80.69999999999993px;height:10.800000000000011px;line-height:10.800000000000011px;text-align:center;white-space:nowrap;overflow:hidden;font-size:7.05px;color:#3a3a3a">100.0</div>
<div class="a" style="left:953.3px;top:389.0px;width:79.90000000000009px;height:10.800000000000011px;line-height:10.800000000000011px;text-align:center;white-space:nowrap;overflow:hidden;font-size:7.05px;color:#3a3a3a">100.0</div>
<div class="a" style="left:1033.2px;top:389.0px;width:80.89999999999986px;height:10.800000000000011px;line-height:10.800000000000011px;text-align:center;white-space:nowrap;overflow:hidden;font-size:7.05px;color:#3a3a3a">100.0</div>
<div class="a" style="left:1114.1px;top:389.0px;width:80.70000000000005px;height:10.800000000000011px;line-height:10.800000000000011px;text-align:center;white-space:nowrap;overflow:hidden;font-size:7.05px;color:#3a3a3a">1</div>
<div class="a" style="left:1194.8px;top:389.0px;width:80.20000000000005px;height:10.800000000000011px;line-height:10.800000000000011px;text-align:center;white-space:nowrap;overflow:hidden;font-size:7.05px;color:#3a3a3a">0</div>
<div class="a" style="left:1275px;top:389.0px;width:80px;height:10.800000000000011px;line-height:10.800000000000011px;text-align:center;white-space:nowrap;overflow:hidden;font-size:7.05px;color:#3a3a3a">1</div>
<div class="a" style="left:193.2px;top:399.8px;width:94.80000000000001px;height:10.800000000000011px;line-height:10.800000000000011px;text-align:left;white-space:nowrap;overflow:hidden;font-size:7.05px;color:#3a3a3a">Honda HR-V 2016 (Auto)</div>
<div class="a" style="left:288.5px;top:399.8px;width:93.5px;height:10.800000000000011px;line-height:10.800000000000011px;text-align:left;white-space:nowrap;overflow:hidden;font-size:7.05px;color:#3a3a3a">Vehicle, Gasoline or Petrol, L</div>
<div class="a" style="left:383px;top:399.8px;width:75.39999999999998px;height:10.800000000000011px;line-height:10.800000000000011px;text-align:center;white-space:nowrap;overflow:hidden;font-size:7.05px;color:#3a3a3a">27.59</div>
<div class="a" style="left:458.4px;top:399.8px;width:77.10000000000002px;height:10.800000000000011px;line-height:10.800000000000011px;text-align:center;white-space:nowrap;overflow:hidden;font-size:7.05px;color:#3a3a3a">60.0</div>
<div class="a" style="left:535.5px;top:399.8px;width:95.89999999999998px;height:10.800000000000011px;line-height:10.800000000000011px;text-align:center;white-space:nowrap;overflow:hidden;font-size:7.05px;color:#3a3a3a">Risco médio</div>
<div class="a" style="left:631.4px;top:399.8px;width:80.0px;height:10.800000000000011px;line-height:10.800000000000011px;text-align:center;white-space:nowrap;overflow:hidden;font-size:7.05px;color:#3a3a3a">100.0</div>
<div class="a" style="left:711.4px;top:399.8px;width:80.80000000000007px;height:10.800000000000011px;line-height:10.800000000000011px;text-align:center;white-space:nowrap;overflow:hidden;font-size:7.05px;color:#3a3a3a">100.0</div>
<div class="a" style="left:792.2px;top:399.8px;width:80.39999999999998px;height:10.800000000000011px;line-height:10.800000000000011px;text-align:center;white-space:nowrap;overflow:hidden;font-size:7.05px;color:#3a3a3a">100.0</div>
<div class="a" style="left:872.6px;top:399.8px;width:80.69999999999993px;height:10.800000000000011px;line-height:10.800000000000011px;text-align:center;white-space:nowrap;overflow:hidden;font-size:7.05px;color:#3a3a3a">0.0</div>
<div class="a" style="left:953.3px;top:399.8px;width:79.90000000000009px;height:10.800000000000011px;line-height:10.800000000000011px;text-align:center;white-space:nowrap;overflow:hidden;font-size:7.05px;color:#3a3a3a">0.0</div>
<div class="a" style="left:1033.2px;top:399.8px;width:80.89999999999986px;height:10.800000000000011px;line-height:10.800000000000011px;text-align:center;white-space:nowrap;overflow:hidden;font-size:7.05px;color:#3a3a3a">100.0</div>
<div class="a" style="left:1114.1px;top:399.8px;width:80.70000000000005px;height:10.800000000000011px;line-height:10.800000000000011px;text-align:center;white-space:nowrap;overflow:hidden;font-size:7.05px;color:#3a3a3a">6</div>
<div class="a" style="left:1194.8px;top:399.8px;width:80.20000000000005px;height:10.800000000000011px;line-height:10.800000000000011px;text-align:center;white-space:nowrap;overflow:hidden;font-size:7.05px;color:#3a3a3a">0</div>
<div class="a" style="left:1275px;top:399.8px;width:80px;height:10.800000000000011px;line-height:10.800000000000011px;text-align:center;white-space:nowrap;overflow:hidden;font-size:7.05px;color:#3a3a3a">0</div>
<div class="a" style="left:193.2px;top:410.6px;width:94.80000000000001px;height:10.800000000000011px;line-height:10.800000000000011px;text-align:left;white-space:nowrap;overflow:hidden;font-size:7.05px;color:#3a3a3a">Honda Fit (Auto)</div>
<div class="a" style="left:288.5px;top:410.6px;width:93.5px;height:10.800000000000011px;line-height:10.800000000000011px;text-align:left;white-space:nowrap;overflow:hidden;font-size:7.05px;color:#3a3a3a">Vehicle</div>
<div class="a" style="left:383px;top:410.6px;width:75.39999999999998px;height:10.800000000000011px;line-height:10.800000000000011px;text-align:center;white-space:nowrap;overflow:hidden;font-size:7.05px;color:#3a3a3a">8.29</div>
<div class="a" style="left:458.4px;top:410.6px;width:77.10000000000002px;height:10.800000000000011px;line-height:10.800000000000011px;text-align:center;white-space:nowrap;overflow:hidden;font-size:7.05px;color:#3a3a3a">100.0</div>
<div class="a" style="left:535.5px;top:410.6px;width:95.89999999999998px;height:10.800000000000011px;line-height:10.800000000000011px;text-align:center;white-space:nowrap;overflow:hidden;font-size:7.05px;color:#3a3a3a">Risco baixo</div>
<div class="a" style="left:631.4px;top:410.6px;width:80.0px;height:10.800000000000011px;line-height:10.800000000000011px;text-align:center;white-space:nowrap;overflow:hidden;font-size:7.05px;color:#3a3a3a">100.0</div>
<div class="a" style="left:711.4px;top:410.6px;width:80.80000000000007px;height:10.800000000000011px;line-height:10.800000000000011px;text-align:center;white-space:nowrap;overflow:hidden;font-size:7.05px;color:#3a3a3a">100.0</div>
<div class="a" style="left:792.2px;top:410.6px;width:80.39999999999998px;height:10.800000000000011px;line-height:10.800000000000011px;text-align:center;white-space:nowrap;overflow:hidden;font-size:7.05px;color:#3a3a3a">100.0</div>
<div class="a" style="left:872.6px;top:410.6px;width:80.69999999999993px;height:10.800000000000011px;line-height:10.800000000000011px;text-align:center;white-space:nowrap;overflow:hidden;font-size:7.05px;color:#3a3a3a">100.0</div>
<div class="a" style="left:953.3px;top:410.6px;width:79.90000000000009px;height:10.800000000000011px;line-height:10.800000000000011px;text-align:center;white-space:nowrap;overflow:hidden;font-size:7.05px;color:#3a3a3a">100.0</div>
<div class="a" style="left:1033.2px;top:410.6px;width:80.89999999999986px;height:10.800000000000011px;line-height:10.800000000000011px;text-align:center;white-space:nowrap;overflow:hidden;font-size:7.05px;color:#3a3a3a">100.0</div>
<div class="a" style="left:1114.1px;top:410.6px;width:80.70000000000005px;height:10.800000000000011px;line-height:10.800000000000011px;text-align:center;white-space:nowrap;overflow:hidden;font-size:7.05px;color:#3a3a3a">0</div>
<div class="a" style="left:1194.8px;top:410.6px;width:80.20000000000005px;height:10.800000000000011px;line-height:10.800000000000011px;text-align:center;white-space:nowrap;overflow:hidden;font-size:7.05px;color:#3a3a3a">0</div>
<div class="a" style="left:1275px;top:410.6px;width:80px;height:10.800000000000011px;line-height:10.800000000000011px;text-align:center;white-space:nowrap;overflow:hidden;font-size:7.05px;color:#3a3a3a">0</div>
<div class="a" style="left:193.2px;top:421.4px;width:94.80000000000001px;height:10.800000000000011px;line-height:10.800000000000011px;text-align:left;white-space:nowrap;overflow:hidden;font-size:7.05px;color:#3a3a3a">Ford Escape PHEV - GO9</div>
<div class="a" style="left:288.5px;top:421.4px;width:93.5px;height:10.800000000000011px;line-height:10.800000000000011px;text-align:left;white-space:nowrap;overflow:hidden;font-size:7.05px;color:#3a3a3a">Container, Vehicle, Plug-in H</div>
<div class="a" style="left:383px;top:421.4px;width:75.39999999999998px;height:10.800000000000011px;line-height:10.800000000000011px;text-align:center;white-space:nowrap;overflow:hidden;font-size:7.05px;color:#3a3a3a">10.37</div>
<div class="a" style="left:458.4px;top:421.4px;width:77.10000000000002px;height:10.800000000000011px;line-height:10.800000000000011px;text-align:center;white-space:nowrap;overflow:hidden;font-size:7.05px;color:#3a3a3a">100.0</div>
<div class="a" style="left:535.5px;top:421.4px;width:95.89999999999998px;height:10.800000000000011px;line-height:10.800000000000011px;text-align:center;white-space:nowrap;overflow:hidden;font-size:7.05px;color:#3a3a3a">Risco baixo</div>
<div class="a" style="left:631.4px;top:421.4px;width:80.0px;height:10.800000000000011px;line-height:10.800000000000011px;text-align:center;white-space:nowrap;overflow:hidden;font-size:7.05px;color:#3a3a3a">100.0</div>
<div class="a" style="left:711.4px;top:421.4px;width:80.80000000000007px;height:10.800000000000011px;line-height:10.800000000000011px;text-align:center;white-space:nowrap;overflow:hidden;font-size:7.05px;color:#3a3a3a">100.0</div>
<div class="a" style="left:792.2px;top:421.4px;width:80.39999999999998px;height:10.800000000000011px;line-height:10.800000000000011px;text-align:center;white-space:nowrap;overflow:hidden;font-size:7.05px;color:#3a3a3a">100.0</div>
<div class="a" style="left:872.6px;top:421.4px;width:80.69999999999993px;height:10.800000000000011px;line-height:10.800000000000011px;text-align:center;white-space:nowrap;overflow:hidden;font-size:7.05px;color:#3a3a3a">100.0</div>
<div class="a" style="left:953.3px;top:421.4px;width:79.90000000000009px;height:10.800000000000011px;line-height:10.800000000000011px;text-align:center;white-space:nowrap;overflow:hidden;font-size:7.05px;color:#3a3a3a">100.0</div>
<div class="a" style="left:1033.2px;top:421.4px;width:80.89999999999986px;height:10.800000000000011px;line-height:10.800000000000011px;text-align:center;white-space:nowrap;overflow:hidden;font-size:7.05px;color:#3a3a3a">100.0</div>
<div class="a" style="left:1114.1px;top:421.4px;width:80.70000000000005px;height:10.800000000000011px;line-height:10.800000000000011px;text-align:center;white-space:nowrap;overflow:hidden;font-size:7.05px;color:#3a3a3a">0</div>
<div class="a" style="left:1194.8px;top:421.4px;width:80.20000000000005px;height:10.800000000000011px;line-height:10.800000000000011px;text-align:center;white-space:nowrap;overflow:hidden;font-size:7.05px;color:#3a3a3a">0</div>
<div class="a" style="left:1275px;top:421.4px;width:80px;height:10.800000000000011px;line-height:10.800000000000011px;text-align:center;white-space:nowrap;overflow:hidden;font-size:7.05px;color:#3a3a3a">0</div>
<div class="a" style="left:193.2px;top:432.2px;width:94.80000000000001px;height:10.800000000000011px;line-height:10.800000000000011px;text-align:left;white-space:nowrap;overflow:hidden;font-size:7.05px;color:#3a3a3a">Ford Escape PHEV - OEM</div>
<div class="a" style="left:288.5px;top:432.2px;width:93.5px;height:10.800000000000011px;line-height:10.800000000000011px;text-align:left;white-space:nowrap;overflow:hidden;font-size:7.05px;color:#3a3a3a">Vehicle, Plug-in Hybrid Electr</div>
<div class="a" style="left:383px;top:432.2px;width:75.39999999999998px;height:10.800000000000011px;line-height:10.800000000000011px;text-align:center;white-space:nowrap;overflow:hidden;font-size:7.05px;color:#3a3a3a">10.47</div>
<div class="a" style="left:458.4px;top:432.2px;width:77.10000000000002px;height:10.800000000000011px;line-height:10.800000000000011px;text-align:center;white-space:nowrap;overflow:hidden;font-size:7.05px;color:#3a3a3a">100.0</div>
<div class="a" style="left:535.5px;top:432.2px;width:95.89999999999998px;height:10.800000000000011px;line-height:10.800000000000011px;text-align:center;white-space:nowrap;overflow:hidden;font-size:7.05px;color:#3a3a3a">Risco baixo</div>
<div class="a" style="left:631.4px;top:432.2px;width:80.0px;height:10.800000000000011px;line-height:10.800000000000011px;text-align:center;white-space:nowrap;overflow:hidden;font-size:7.05px;color:#3a3a3a">100.0</div>
<div class="a" style="left:711.4px;top:432.2px;width:80.80000000000007px;height:10.800000000000011px;line-height:10.800000000000011px;text-align:center;white-space:nowrap;overflow:hidden;font-size:7.05px;color:#3a3a3a">100.0</div>
<div class="a" style="left:792.2px;top:432.2px;width:80.39999999999998px;height:10.800000000000011px;line-height:10.800000000000011px;text-align:center;white-space:nowrap;overflow:hidden;font-size:7.05px;color:#3a3a3a">100.0</div>
<div class="a" style="left:872.6px;top:432.2px;width:80.69999999999993px;height:10.800000000000011px;line-height:10.800000000000011px;text-align:center;white-space:nowrap;overflow:hidden;font-size:7.05px;color:#3a3a3a">100.0</div>
<div class="a" style="left:953.3px;top:432.2px;width:79.90000000000009px;height:10.800000000000011px;line-height:10.800000000000011px;text-align:center;white-space:nowrap;overflow:hidden;font-size:7.05px;color:#3a3a3a">100.0</div>
<div class="a" style="left:1033.2px;top:432.2px;width:80.89999999999986px;height:10.800000000000011px;line-height:10.800000000000011px;text-align:center;white-space:nowrap;overflow:hidden;font-size:7.05px;color:#3a3a3a">100.0</div>
<div class="a" style="left:1114.1px;top:432.2px;width:80.70000000000005px;height:10.800000000000011px;line-height:10.800000000000011px;text-align:center;white-space:nowrap;overflow:hidden;font-size:7.05px;color:#3a3a3a">0</div>
<div class="a" style="left:1194.8px;top:432.2px;width:80.20000000000005px;height:10.800000000000011px;line-height:10.800000000000011px;text-align:center;white-space:nowrap;overflow:hidden;font-size:7.05px;color:#3a3a3a">0</div>
<div class="a" style="left:1275px;top:432.2px;width:80px;height:10.800000000000011px;line-height:10.800000000000011px;text-align:center;white-space:nowrap;overflow:hidden;font-size:7.05px;color:#3a3a3a">0</div>
<div class="a" style="left:193.2px;top:443.0px;width:94.80000000000001px;height:10.800000000000011px;line-height:10.800000000000011px;text-align:left;white-space:nowrap;overflow:hidden;font-size:7.05px;color:#3a3a3a">Hyundai Venue</div>
<div class="a" style="left:288.5px;top:443.0px;width:93.5px;height:10.800000000000011px;line-height:10.800000000000011px;text-align:left;white-space:nowrap;overflow:hidden;font-size:7.05px;color:#3a3a3a">Vehicle, Gasoline or Petrol</div>
<div class="a" style="left:383px;top:443.0px;width:75.39999999999998px;height:10.800000000000011px;line-height:10.800000000000011px;text-align:center;white-space:nowrap;overflow:hidden;font-size:7.05px;color:#3a3a3a">5.71</div>
<div class="a" style="left:458.4px;top:443.0px;width:77.10000000000002px;height:10.800000000000011px;line-height:10.800000000000011px;text-align:center;white-space:nowrap;overflow:hidden;font-size:7.05px;color:#3a3a3a">100.0</div>
<div class="a" style="left:535.5px;top:443.0px;width:95.89999999999998px;height:10.800000000000011px;line-height:10.800000000000011px;text-align:center;white-space:nowrap;overflow:hidden;font-size:7.05px;color:#3a3a3a">Risco baixo</div>
<div class="a" style="left:631.4px;top:443.0px;width:80.0px;height:10.800000000000011px;line-height:10.800000000000011px;text-align:center;white-space:nowrap;overflow:hidden;font-size:7.05px;color:#3a3a3a">100.0</div>
<div class="a" style="left:711.4px;top:443.0px;width:80.80000000000007px;height:10.800000000000011px;line-height:10.800000000000011px;text-align:center;white-space:nowrap;overflow:hidden;font-size:7.05px;color:#3a3a3a">100.0</div>
<div class="a" style="left:792.2px;top:443.0px;width:80.39999999999998px;height:10.800000000000011px;line-height:10.800000000000011px;text-align:center;white-space:nowrap;overflow:hidden;font-size:7.05px;color:#3a3a3a">100.0</div>
<div class="a" style="left:872.6px;top:443.0px;width:80.69999999999993px;height:10.800000000000011px;line-height:10.800000000000011px;text-align:center;white-space:nowrap;overflow:hidden;font-size:7.05px;color:#3a3a3a">100.0</div>
<div class="a" style="left:953.3px;top:443.0px;width:79.90000000000009px;height:10.800000000000011px;line-height:10.800000000000011px;text-align:center;white-space:nowrap;overflow:hidden;font-size:7.05px;color:#3a3a3a">100.0</div>
<div class="a" style="left:1033.2px;top:443.0px;width:80.89999999999986px;height:10.800000000000011px;line-height:10.800000000000011px;text-align:center;white-space:nowrap;overflow:hidden;font-size:7.05px;color:#3a3a3a">100.0</div>
<div class="a" style="left:1114.1px;top:443.0px;width:80.70000000000005px;height:10.800000000000011px;line-height:10.800000000000011px;text-align:center;white-space:nowrap;overflow:hidden;font-size:7.05px;color:#3a3a3a">0</div>
<div class="a" style="left:1194.8px;top:443.0px;width:80.20000000000005px;height:10.800000000000011px;line-height:10.800000000000011px;text-align:center;white-space:nowrap;overflow:hidden;font-size:7.05px;color:#3a3a3a">0</div>
<div class="a" style="left:1275px;top:443.0px;width:80px;height:10.800000000000011px;line-height:10.800000000000011px;text-align:center;white-space:nowrap;overflow:hidden;font-size:7.05px;color:#3a3a3a">0</div>
<div class="a" style="left:193.2px;top:453.8px;width:94.80000000000001px;height:10.800000000000011px;line-height:10.800000000000011px;text-align:left;white-space:nowrap;overflow:hidden;font-size:7.05px;color:#3a3a3a">Audi Q3 2018</div>
<div class="a" style="left:288.5px;top:453.8px;width:93.5px;height:10.800000000000011px;line-height:10.800000000000011px;text-align:left;white-space:nowrap;overflow:hidden;font-size:7.05px;color:#3a3a3a">Vehicle, Gasoline or Petrol</div>
<div class="a" style="left:383px;top:453.8px;width:75.39999999999998px;height:10.800000000000011px;line-height:10.800000000000011px;text-align:center;white-space:nowrap;overflow:hidden;font-size:7.05px;color:#3a3a3a">0.00</div>
<div class="a" style="left:458.4px;top:453.8px;width:77.10000000000002px;height:10.800000000000011px;line-height:10.800000000000011px;text-align:center;white-space:nowrap;overflow:hidden;font-size:7.05px;color:#3a3a3a">-</div>
<div class="a" style="left:535.5px;top:453.8px;width:95.89999999999998px;height:10.800000000000011px;line-height:10.800000000000011px;text-align:center;white-space:nowrap;overflow:hidden;font-size:7.4px;color:#3a3a3a">No Activity</div>
<div class="a" style="left:631.4px;top:453.8px;width:80.0px;height:10.800000000000011px;line-height:10.800000000000011px;text-align:center;white-space:nowrap;overflow:hidden;font-size:7.05px;color:#3a3a3a">-</div>
<div class="a" style="left:711.4px;top:453.8px;width:80.80000000000007px;height:10.800000000000011px;line-height:10.800000000000011px;text-align:center;white-space:nowrap;overflow:hidden;font-size:7.05px;color:#3a3a3a">-</div>
<div class="a" style="left:792.2px;top:453.8px;width:80.39999999999998px;height:10.800000000000011px;line-height:10.800000000000011px;text-align:center;white-space:nowrap;overflow:hidden;font-size:7.05px;color:#3a3a3a">-</div>
<div class="a" style="left:872.6px;top:453.8px;width:80.69999999999993px;height:10.800000000000011px;line-height:10.800000000000011px;text-align:center;white-space:nowrap;overflow:hidden;font-size:7.05px;color:#3a3a3a">-</div>
<div class="a" style="left:953.3px;top:453.8px;width:79.90000000000009px;height:10.800000000000011px;line-height:10.800000000000011px;text-align:center;white-space:nowrap;overflow:hidden;font-size:7.05px;color:#3a3a3a">-</div>
<div class="a" style="left:1033.2px;top:453.8px;width:80.89999999999986px;height:10.800000000000011px;line-height:10.800000000000011px;text-align:center;white-space:nowrap;overflow:hidden;font-size:7.05px;color:#3a3a3a">-</div>
<div class="a" style="left:1114.1px;top:453.8px;width:80.70000000000005px;height:10.800000000000011px;line-height:10.800000000000011px;text-align:center;white-space:nowrap;overflow:hidden;font-size:7.05px;color:#3a3a3a">0</div>
<div class="a" style="left:1194.8px;top:453.8px;width:80.20000000000005px;height:10.800000000000011px;line-height:10.800000000000011px;text-align:center;white-space:nowrap;overflow:hidden;font-size:7.05px;color:#3a3a3a">0</div>
<div class="a" style="left:1275px;top:453.8px;width:80px;height:10.800000000000011px;line-height:10.800000000000011px;text-align:center;white-space:nowrap;overflow:hidden;font-size:7.05px;color:#3a3a3a">0</div>
<div class="a" style="left:193.2px;top:464.6px;width:94.80000000000001px;height:10.800000000000011px;line-height:10.800000000000011px;text-align:left;white-space:nowrap;overflow:hidden;font-size:7.05px;color:#3a3a3a">Fiat-Pulse-Edu (2024)</div>
<div class="a" style="left:288.5px;top:464.6px;width:93.5px;height:10.800000000000011px;line-height:10.800000000000011px;text-align:left;white-space:nowrap;overflow:hidden;font-size:7.05px;color:#3a3a3a">Vehicle</div>
<div class="a" style="left:383px;top:464.6px;width:75.39999999999998px;height:10.800000000000011px;line-height:10.800000000000011px;text-align:center;white-space:nowrap;overflow:hidden;font-size:7.05px;color:#3a3a3a">0.00</div>
<div class="a" style="left:458.4px;top:464.6px;width:77.10000000000002px;height:10.800000000000011px;line-height:10.800000000000011px;text-align:center;white-space:nowrap;overflow:hidden;font-size:7.05px;color:#3a3a3a">-</div>
<div class="a" style="left:535.5px;top:464.6px;width:95.89999999999998px;height:10.800000000000011px;line-height:10.800000000000011px;text-align:center;white-space:nowrap;overflow:hidden;font-size:7.4px;color:#3a3a3a">No Activity</div>
<div class="a" style="left:631.4px;top:464.6px;width:80.0px;height:10.800000000000011px;line-height:10.800000000000011px;text-align:center;white-space:nowrap;overflow:hidden;font-size:7.05px;color:#3a3a3a">-</div>
<div class="a" style="left:711.4px;top:464.6px;width:80.80000000000007px;height:10.800000000000011px;line-height:10.800000000000011px;text-align:center;white-space:nowrap;overflow:hidden;font-size:7.05px;color:#3a3a3a">-</div>
<div class="a" style="left:792.2px;top:464.6px;width:80.39999999999998px;height:10.800000000000011px;line-height:10.800000000000011px;text-align:center;white-space:nowrap;overflow:hidden;font-size:7.05px;color:#3a3a3a">-</div>
<div class="a" style="left:872.6px;top:464.6px;width:80.69999999999993px;height:10.800000000000011px;line-height:10.800000000000011px;text-align:center;white-space:nowrap;overflow:hidden;font-size:7.05px;color:#3a3a3a">-</div>
<div class="a" style="left:953.3px;top:464.6px;width:79.90000000000009px;height:10.800000000000011px;line-height:10.800000000000011px;text-align:center;white-space:nowrap;overflow:hidden;font-size:7.05px;color:#3a3a3a">-</div>
<div class="a" style="left:1033.2px;top:464.6px;width:80.89999999999986px;height:10.800000000000011px;line-height:10.800000000000011px;text-align:center;white-space:nowrap;overflow:hidden;font-size:7.05px;color:#3a3a3a">-</div>
<div class="a" style="left:1114.1px;top:464.6px;width:80.70000000000005px;height:10.800000000000011px;line-height:10.800000000000011px;text-align:center;white-space:nowrap;overflow:hidden;font-size:7.05px;color:#3a3a3a">0</div>
<div class="a" style="left:1194.8px;top:464.6px;width:80.20000000000005px;height:10.800000000000011px;line-height:10.800000000000011px;text-align:center;white-space:nowrap;overflow:hidden;font-size:7.05px;color:#3a3a3a">0</div>
<div class="a" style="left:1275px;top:464.6px;width:80px;height:10.800000000000011px;line-height:10.800000000000011px;text-align:center;white-space:nowrap;overflow:hidden;font-size:7.05px;color:#3a3a3a">0</div>
<div class="a" style="left:193.2px;top:475.4px;width:94.80000000000001px;height:10.800000000000011px;line-height:10.800000000000011px;text-align:left;white-space:nowrap;overflow:hidden;font-size:7.05px;color:#3a3a3a">Ford Edge Limited</div>
<div class="a" style="left:288.5px;top:475.4px;width:93.5px;height:10.800000000000011px;line-height:10.800000000000011px;text-align:left;white-space:nowrap;overflow:hidden;font-size:7.05px;color:#3a3a3a">Vehicle, Leves, São Paulo</div>
<div class="a" style="left:383px;top:475.4px;width:75.39999999999998px;height:10.800000000000011px;line-height:10.800000000000011px;text-align:center;white-space:nowrap;overflow:hidden;font-size:7.05px;color:#3a3a3a">0.00</div>
<div class="a" style="left:458.4px;top:475.4px;width:77.10000000000002px;height:10.800000000000011px;line-height:10.800000000000011px;text-align:center;white-space:nowrap;overflow:hidden;font-size:7.05px;color:#3a3a3a">-</div>
<div class="a" style="left:535.5px;top:475.4px;width:95.89999999999998px;height:10.800000000000011px;line-height:10.800000000000011px;text-align:center;white-space:nowrap;overflow:hidden;font-size:7.4px;color:#3a3a3a">No Activity</div>
<div class="a" style="left:631.4px;top:475.4px;width:80.0px;height:10.800000000000011px;line-height:10.800000000000011px;text-align:center;white-space:nowrap;overflow:hidden;font-size:7.05px;color:#3a3a3a">-</div>
<div class="a" style="left:711.4px;top:475.4px;width:80.80000000000007px;height:10.800000000000011px;line-height:10.800000000000011px;text-align:center;white-space:nowrap;overflow:hidden;font-size:7.05px;color:#3a3a3a">-</div>
<div class="a" style="left:792.2px;top:475.4px;width:80.39999999999998px;height:10.800000000000011px;line-height:10.800000000000011px;text-align:center;white-space:nowrap;overflow:hidden;font-size:7.05px;color:#3a3a3a">-</div>
<div class="a" style="left:872.6px;top:475.4px;width:80.69999999999993px;height:10.800000000000011px;line-height:10.800000000000011px;text-align:center;white-space:nowrap;overflow:hidden;font-size:7.05px;color:#3a3a3a">-</div>
<div class="a" style="left:953.3px;top:475.4px;width:79.90000000000009px;height:10.800000000000011px;line-height:10.800000000000011px;text-align:center;white-space:nowrap;overflow:hidden;font-size:7.05px;color:#3a3a3a">-</div>
<div class="a" style="left:1033.2px;top:475.4px;width:80.89999999999986px;height:10.800000000000011px;line-height:10.800000000000011px;text-align:center;white-space:nowrap;overflow:hidden;font-size:7.05px;color:#3a3a3a">-</div>
<div class="a" style="left:1114.1px;top:475.4px;width:80.70000000000005px;height:10.800000000000011px;line-height:10.800000000000011px;text-align:center;white-space:nowrap;overflow:hidden;font-size:7.05px;color:#3a3a3a">0</div>
<div class="a" style="left:1194.8px;top:475.4px;width:80.20000000000005px;height:10.800000000000011px;line-height:10.800000000000011px;text-align:center;white-space:nowrap;overflow:hidden;font-size:7.05px;color:#3a3a3a">0</div>
<div class="a" style="left:1275px;top:475.4px;width:80px;height:10.800000000000011px;line-height:10.800000000000011px;text-align:center;white-space:nowrap;overflow:hidden;font-size:7.05px;color:#3a3a3a">0</div>
<div class="a" style="left:193.2px;top:486.2px;width:94.80000000000001px;height:10.800000000000011px;line-height:10.800000000000011px;text-align:left;white-space:nowrap;overflow:hidden;font-size:7.05px;color:#3a3a3a">GM Cruze</div>
<div class="a" style="left:288.5px;top:486.2px;width:93.5px;height:10.800000000000011px;line-height:10.800000000000011px;text-align:left;white-space:nowrap;overflow:hidden;font-size:7.05px;color:#3a3a3a">Vehicle, Veículos Leves, Leve</div>
<div class="a" style="left:383px;top:486.2px;width:75.39999999999998px;height:10.800000000000011px;line-height:10.800000000000011px;text-align:center;white-space:nowrap;overflow:hidden;font-size:7.05px;color:#3a3a3a">0.00</div>
<div class="a" style="left:458.4px;top:486.2px;width:77.10000000000002px;height:10.800000000000011px;line-height:10.800000000000011px;text-align:center;white-space:nowrap;overflow:hidden;font-size:7.05px;color:#3a3a3a">-</div>
<div class="a" style="left:535.5px;top:486.2px;width:95.89999999999998px;height:10.800000000000011px;line-height:10.800000000000011px;text-align:center;white-space:nowrap;overflow:hidden;font-size:7.4px;color:#3a3a3a">No Activity</div>
<div class="a" style="left:631.4px;top:486.2px;width:80.0px;height:10.800000000000011px;line-height:10.800000000000011px;text-align:center;white-space:nowrap;overflow:hidden;font-size:7.05px;color:#3a3a3a">-</div>
<div class="a" style="left:711.4px;top:486.2px;width:80.80000000000007px;height:10.800000000000011px;line-height:10.800000000000011px;text-align:center;white-space:nowrap;overflow:hidden;font-size:7.05px;color:#3a3a3a">-</div>
<div class="a" style="left:792.2px;top:486.2px;width:80.39999999999998px;height:10.800000000000011px;line-height:10.800000000000011px;text-align:center;white-space:nowrap;overflow:hidden;font-size:7.05px;color:#3a3a3a">-</div>
<div class="a" style="left:872.6px;top:486.2px;width:80.69999999999993px;height:10.800000000000011px;line-height:10.800000000000011px;text-align:center;white-space:nowrap;overflow:hidden;font-size:7.05px;color:#3a3a3a">-</div>
<div class="a" style="left:953.3px;top:486.2px;width:79.90000000000009px;height:10.800000000000011px;line-height:10.800000000000011px;text-align:center;white-space:nowrap;overflow:hidden;font-size:7.05px;color:#3a3a3a">-</div>
<div class="a" style="left:1033.2px;top:486.2px;width:80.89999999999986px;height:10.800000000000011px;line-height:10.800000000000011px;text-align:center;white-space:nowrap;overflow:hidden;font-size:7.05px;color:#3a3a3a">-</div>
<div class="a" style="left:1114.1px;top:486.2px;width:80.70000000000005px;height:10.800000000000011px;line-height:10.800000000000011px;text-align:center;white-space:nowrap;overflow:hidden;font-size:7.05px;color:#3a3a3a">0</div>
<div class="a" style="left:1194.8px;top:486.2px;width:80.20000000000005px;height:10.800000000000011px;line-height:10.800000000000011px;text-align:center;white-space:nowrap;overflow:hidden;font-size:7.05px;color:#3a3a3a">0</div>
<div class="a" style="left:1275px;top:486.2px;width:80px;height:10.800000000000011px;line-height:10.800000000000011px;text-align:center;white-space:nowrap;overflow:hidden;font-size:7.05px;color:#3a3a3a">0</div>
<div class="a" style="left:193.2px;top:497.0px;width:94.80000000000001px;height:10.800000000000011px;line-height:10.800000000000011px;text-align:left;white-space:nowrap;overflow:hidden;font-size:7.05px;color:#3a3a3a">GO Teste - Carol</div>
<div class="a" style="left:288.5px;top:497.0px;width:93.5px;height:10.800000000000011px;line-height:10.800000000000011px;text-align:left;white-space:nowrap;overflow:hidden;font-size:7.05px;color:#3a3a3a">Vehicle</div>
<div class="a" style="left:383px;top:497.0px;width:75.39999999999998px;height:10.800000000000011px;line-height:10.800000000000011px;text-align:center;white-space:nowrap;overflow:hidden;font-size:7.05px;color:#3a3a3a">0.00</div>
<div class="a" style="left:458.4px;top:497.0px;width:77.10000000000002px;height:10.800000000000011px;line-height:10.800000000000011px;text-align:center;white-space:nowrap;overflow:hidden;font-size:7.05px;color:#3a3a3a">-</div>
<div class="a" style="left:535.5px;top:497.0px;width:95.89999999999998px;height:10.800000000000011px;line-height:10.800000000000011px;text-align:center;white-space:nowrap;overflow:hidden;font-size:7.4px;color:#3a3a3a">No Activity</div>
<div class="a" style="left:631.4px;top:497.0px;width:80.0px;height:10.800000000000011px;line-height:10.800000000000011px;text-align:center;white-space:nowrap;overflow:hidden;font-size:7.05px;color:#3a3a3a">-</div>
<div class="a" style="left:711.4px;top:497.0px;width:80.80000000000007px;height:10.800000000000011px;line-height:10.800000000000011px;text-align:center;white-space:nowrap;overflow:hidden;font-size:7.05px;color:#3a3a3a">-</div>
<div class="a" style="left:792.2px;top:497.0px;width:80.39999999999998px;height:10.800000000000011px;line-height:10.800000000000011px;text-align:center;white-space:nowrap;overflow:hidden;font-size:7.05px;color:#3a3a3a">-</div>
<div class="a" style="left:872.6px;top:497.0px;width:80.69999999999993px;height:10.800000000000011px;line-height:10.800000000000011px;text-align:center;white-space:nowrap;overflow:hidden;font-size:7.05px;color:#3a3a3a">-</div>
<div class="a" style="left:953.3px;top:497.0px;width:79.90000000000009px;height:10.800000000000011px;line-height:10.800000000000011px;text-align:center;white-space:nowrap;overflow:hidden;font-size:7.05px;color:#3a3a3a">-</div>
<div class="a" style="left:1033.2px;top:497.0px;width:80.89999999999986px;height:10.800000000000011px;line-height:10.800000000000011px;text-align:center;white-space:nowrap;overflow:hidden;font-size:7.05px;color:#3a3a3a">-</div>
<div class="a" style="left:1114.1px;top:497.0px;width:80.70000000000005px;height:10.800000000000011px;line-height:10.800000000000011px;text-align:center;white-space:nowrap;overflow:hidden;font-size:7.05px;color:#3a3a3a">0</div>
<div class="a" style="left:1194.8px;top:497.0px;width:80.20000000000005px;height:10.800000000000011px;line-height:10.800000000000011px;text-align:center;white-space:nowrap;overflow:hidden;font-size:7.05px;color:#3a3a3a">0</div>
<div class="a" style="left:1275px;top:497.0px;width:80px;height:10.800000000000011px;line-height:10.800000000000011px;text-align:center;white-space:nowrap;overflow:hidden;font-size:7.05px;color:#3a3a3a">0</div>
<div class="a" style="left:193.2px;top:507.8px;width:94.80000000000001px;height:10.800000000000011px;line-height:10.800000000000011px;text-align:left;white-space:nowrap;overflow:hidden;font-size:7.05px;color:#3a3a3a">GO9 Bancada Marcelo</div>
<div class="a" style="left:288.5px;top:507.8px;width:93.5px;height:10.800000000000011px;line-height:10.800000000000011px;text-align:left;white-space:nowrap;overflow:hidden;font-size:7.05px;color:#3a3a3a">Vehicle</div>
<div class="a" style="left:383px;top:507.8px;width:75.39999999999998px;height:10.800000000000011px;line-height:10.800000000000011px;text-align:center;white-space:nowrap;overflow:hidden;font-size:7.05px;color:#3a3a3a">0.00</div>
<div class="a" style="left:458.4px;top:507.8px;width:77.10000000000002px;height:10.800000000000011px;line-height:10.800000000000011px;text-align:center;white-space:nowrap;overflow:hidden;font-size:7.05px;color:#3a3a3a">-</div>
<div class="a" style="left:535.5px;top:507.8px;width:95.89999999999998px;height:10.800000000000011px;line-height:10.800000000000011px;text-align:center;white-space:nowrap;overflow:hidden;font-size:7.4px;color:#3a3a3a">No Activity</div>
<div class="a" style="left:631.4px;top:507.8px;width:80.0px;height:10.800000000000011px;line-height:10.800000000000011px;text-align:center;white-space:nowrap;overflow:hidden;font-size:7.05px;color:#3a3a3a">-</div>
<div class="a" style="left:711.4px;top:507.8px;width:80.80000000000007px;height:10.800000000000011px;line-height:10.800000000000011px;text-align:center;white-space:nowrap;overflow:hidden;font-size:7.05px;color:#3a3a3a">-</div>
<div class="a" style="left:792.2px;top:507.8px;width:80.39999999999998px;height:10.800000000000011px;line-height:10.800000000000011px;text-align:center;white-space:nowrap;overflow:hidden;font-size:7.05px;color:#3a3a3a">-</div>
<div class="a" style="left:872.6px;top:507.8px;width:80.69999999999993px;height:10.800000000000011px;line-height:10.800000000000011px;text-align:center;white-space:nowrap;overflow:hidden;font-size:7.05px;color:#3a3a3a">-</div>
<div class="a" style="left:953.3px;top:507.8px;width:79.90000000000009px;height:10.800000000000011px;line-height:10.800000000000011px;text-align:center;white-space:nowrap;overflow:hidden;font-size:7.05px;color:#3a3a3a">-</div>
<div class="a" style="left:1033.2px;top:507.8px;width:80.89999999999986px;height:10.800000000000011px;line-height:10.800000000000011px;text-align:center;white-space:nowrap;overflow:hidden;font-size:7.05px;color:#3a3a3a">-</div>
<div class="a" style="left:1114.1px;top:507.8px;width:80.70000000000005px;height:10.800000000000011px;line-height:10.800000000000011px;text-align:center;white-space:nowrap;overflow:hidden;font-size:7.05px;color:#3a3a3a">0</div>
<div class="a" style="left:1194.8px;top:507.8px;width:80.20000000000005px;height:10.800000000000011px;line-height:10.800000000000011px;text-align:center;white-space:nowrap;overflow:hidden;font-size:7.05px;color:#3a3a3a">0</div>
<div class="a" style="left:1275px;top:507.8px;width:80px;height:10.800000000000011px;line-height:10.800000000000011px;text-align:center;white-space:nowrap;overflow:hidden;font-size:7.05px;color:#3a3a3a">0</div>
<div class="a" style="left:193.2px;top:518.6px;width:94.80000000000001px;height:10.799999999999955px;line-height:10.799999999999955px;text-align:left;white-space:nowrap;overflow:hidden;font-size:7.05px;color:#3a3a3a">Go teste - Fernando</div>
<div class="a" style="left:288.5px;top:518.6px;width:93.5px;height:10.799999999999955px;line-height:10.799999999999955px;text-align:left;white-space:nowrap;overflow:hidden;font-size:7.05px;color:#3a3a3a">Vehicle</div>
<div class="a" style="left:383px;top:518.6px;width:75.39999999999998px;height:10.799999999999955px;line-height:10.799999999999955px;text-align:center;white-space:nowrap;overflow:hidden;font-size:7.05px;color:#3a3a3a">0.00</div>
<div class="a" style="left:458.4px;top:518.6px;width:77.10000000000002px;height:10.799999999999955px;line-height:10.799999999999955px;text-align:center;white-space:nowrap;overflow:hidden;font-size:7.05px;color:#3a3a3a">-</div>
<div class="a" style="left:535.5px;top:518.6px;width:95.89999999999998px;height:10.799999999999955px;line-height:10.799999999999955px;text-align:center;white-space:nowrap;overflow:hidden;font-size:7.4px;color:#3a3a3a">No Activity</div>
<div class="a" style="left:631.4px;top:518.6px;width:80.0px;height:10.799999999999955px;line-height:10.799999999999955px;text-align:center;white-space:nowrap;overflow:hidden;font-size:7.05px;color:#3a3a3a">-</div>
<div class="a" style="left:711.4px;top:518.6px;width:80.80000000000007px;height:10.799999999999955px;line-height:10.799999999999955px;text-align:center;white-space:nowrap;overflow:hidden;font-size:7.05px;color:#3a3a3a">-</div>
<div class="a" style="left:792.2px;top:518.6px;width:80.39999999999998px;height:10.799999999999955px;line-height:10.799999999999955px;text-align:center;white-space:nowrap;overflow:hidden;font-size:7.05px;color:#3a3a3a">-</div>
<div class="a" style="left:872.6px;top:518.6px;width:80.69999999999993px;height:10.799999999999955px;line-height:10.799999999999955px;text-align:center;white-space:nowrap;overflow:hidden;font-size:7.05px;color:#3a3a3a">-</div>
<div class="a" style="left:953.3px;top:518.6px;width:79.90000000000009px;height:10.799999999999955px;line-height:10.799999999999955px;text-align:center;white-space:nowrap;overflow:hidden;font-size:7.05px;color:#3a3a3a">-</div>
<div class="a" style="left:1033.2px;top:518.6px;width:80.89999999999986px;height:10.799999999999955px;line-height:10.799999999999955px;text-align:center;white-space:nowrap;overflow:hidden;font-size:7.05px;color:#3a3a3a">-</div>
<div class="a" style="left:1114.1px;top:518.6px;width:80.70000000000005px;height:10.799999999999955px;line-height:10.799999999999955px;text-align:center;white-space:nowrap;overflow:hidden;font-size:7.05px;color:#3a3a3a">0</div>
<div class="a" style="left:1194.8px;top:518.6px;width:80.20000000000005px;height:10.799999999999955px;line-height:10.799999999999955px;text-align:center;white-space:nowrap;overflow:hidden;font-size:7.05px;color:#3a3a3a">0</div>
<div class="a" style="left:1275px;top:518.6px;width:80px;height:10.799999999999955px;line-height:10.799999999999955px;text-align:center;white-space:nowrap;overflow:hidden;font-size:7.05px;color:#3a3a3a">0</div>
<div class="a" style="left:193.2px;top:529.4px;width:94.80000000000001px;height:10.799999999999955px;line-height:10.799999999999955px;text-align:left;white-space:nowrap;overflow:hidden;font-size:7.05px;color:#3a3a3a">HB20</div>
<div class="a" style="left:288.5px;top:529.4px;width:93.5px;height:10.799999999999955px;line-height:10.799999999999955px;text-align:left;white-space:nowrap;overflow:hidden;font-size:7.05px;color:#3a3a3a">Vehicle</div>
<div class="a" style="left:383px;top:529.4px;width:75.39999999999998px;height:10.799999999999955px;line-height:10.799999999999955px;text-align:center;white-space:nowrap;overflow:hidden;font-size:7.05px;color:#3a3a3a">0.00</div>
<div class="a" style="left:458.4px;top:529.4px;width:77.10000000000002px;height:10.799999999999955px;line-height:10.799999999999955px;text-align:center;white-space:nowrap;overflow:hidden;font-size:7.05px;color:#3a3a3a">-</div>
<div class="a" style="left:535.5px;top:529.4px;width:95.89999999999998px;height:10.799999999999955px;line-height:10.799999999999955px;text-align:center;white-space:nowrap;overflow:hidden;font-size:7.4px;color:#3a3a3a">No Activity</div>
<div class="a" style="left:631.4px;top:529.4px;width:80.0px;height:10.799999999999955px;line-height:10.799999999999955px;text-align:center;white-space:nowrap;overflow:hidden;font-size:7.05px;color:#3a3a3a">-</div>
<div class="a" style="left:711.4px;top:529.4px;width:80.80000000000007px;height:10.799999999999955px;line-height:10.799999999999955px;text-align:center;white-space:nowrap;overflow:hidden;font-size:7.05px;color:#3a3a3a">-</div>
<div class="a" style="left:792.2px;top:529.4px;width:80.39999999999998px;height:10.799999999999955px;line-height:10.799999999999955px;text-align:center;white-space:nowrap;overflow:hidden;font-size:7.05px;color:#3a3a3a">-</div>
<div class="a" style="left:872.6px;top:529.4px;width:80.69999999999993px;height:10.799999999999955px;line-height:10.799999999999955px;text-align:center;white-space:nowrap;overflow:hidden;font-size:7.05px;color:#3a3a3a">-</div>
<div class="a" style="left:953.3px;top:529.4px;width:79.90000000000009px;height:10.799999999999955px;line-height:10.799999999999955px;text-align:center;white-space:nowrap;overflow:hidden;font-size:7.05px;color:#3a3a3a">-</div>
<div class="a" style="left:1033.2px;top:529.4px;width:80.89999999999986px;height:10.799999999999955px;line-height:10.799999999999955px;text-align:center;white-space:nowrap;overflow:hidden;font-size:7.05px;color:#3a3a3a">-</div>
<div class="a" style="left:1114.1px;top:529.4px;width:80.70000000000005px;height:10.799999999999955px;line-height:10.799999999999955px;text-align:center;white-space:nowrap;overflow:hidden;font-size:7.05px;color:#3a3a3a">0</div>
<div class="a" style="left:1194.8px;top:529.4px;width:80.20000000000005px;height:10.799999999999955px;line-height:10.799999999999955px;text-align:center;white-space:nowrap;overflow:hidden;font-size:7.05px;color:#3a3a3a">0</div>
<div class="a" style="left:1275px;top:529.4px;width:80px;height:10.799999999999955px;line-height:10.799999999999955px;text-align:center;white-space:nowrap;overflow:hidden;font-size:7.05px;color:#3a3a3a">0</div>
<div class="a" style="left:193.2px;top:540.2px;width:94.80000000000001px;height:10.799999999999955px;line-height:10.799999999999955px;text-align:left;white-space:nowrap;overflow:hidden;font-size:7.05px;color:#3a3a3a">Nissan Kicks (Auto)</div>
<div class="a" style="left:288.5px;top:540.2px;width:93.5px;height:10.799999999999955px;line-height:10.799999999999955px;text-align:left;white-space:nowrap;overflow:hidden;font-size:7.05px;color:#3a3a3a">Vehicle, Grupo Fugi</div>
<div class="a" style="left:383px;top:540.2px;width:75.39999999999998px;height:10.799999999999955px;line-height:10.799999999999955px;text-align:center;white-space:nowrap;overflow:hidden;font-size:7.05px;color:#3a3a3a">0.00</div>
<div class="a" style="left:458.4px;top:540.2px;width:77.10000000000002px;height:10.799999999999955px;line-height:10.799999999999955px;text-align:center;white-space:nowrap;overflow:hidden;font-size:7.05px;color:#3a3a3a">-</div>
<div class="a" style="left:535.5px;top:540.2px;width:95.89999999999998px;height:10.799999999999955px;line-height:10.799999999999955px;text-align:center;white-space:nowrap;overflow:hidden;font-size:7.4px;color:#3a3a3a">No Activity</div>
<div class="a" style="left:631.4px;top:540.2px;width:80.0px;height:10.799999999999955px;line-height:10.799999999999955px;text-align:center;white-space:nowrap;overflow:hidden;font-size:7.05px;color:#3a3a3a">-</div>
<div class="a" style="left:711.4px;top:540.2px;width:80.80000000000007px;height:10.799999999999955px;line-height:10.799999999999955px;text-align:center;white-space:nowrap;overflow:hidden;font-size:7.05px;color:#3a3a3a">-</div>
<div class="a" style="left:792.2px;top:540.2px;width:80.39999999999998px;height:10.799999999999955px;line-height:10.799999999999955px;text-align:center;white-space:nowrap;overflow:hidden;font-size:7.05px;color:#3a3a3a">-</div>
<div class="a" style="left:872.6px;top:540.2px;width:80.69999999999993px;height:10.799999999999955px;line-height:10.799999999999955px;text-align:center;white-space:nowrap;overflow:hidden;font-size:7.05px;color:#3a3a3a">-</div>
<div class="a" style="left:953.3px;top:540.2px;width:79.90000000000009px;height:10.799999999999955px;line-height:10.799999999999955px;text-align:center;white-space:nowrap;overflow:hidden;font-size:7.05px;color:#3a3a3a">-</div>
<div class="a" style="left:1033.2px;top:540.2px;width:80.89999999999986px;height:10.799999999999955px;line-height:10.799999999999955px;text-align:center;white-space:nowrap;overflow:hidden;font-size:7.05px;color:#3a3a3a">-</div>
<div class="a" style="left:1114.1px;top:540.2px;width:80.70000000000005px;height:10.799999999999955px;line-height:10.799999999999955px;text-align:center;white-space:nowrap;overflow:hidden;font-size:7.05px;color:#3a3a3a">0</div>
<div class="a" style="left:1194.8px;top:540.2px;width:80.20000000000005px;height:10.799999999999955px;line-height:10.799999999999955px;text-align:center;white-space:nowrap;overflow:hidden;font-size:7.05px;color:#3a3a3a">0</div>
<div class="a" style="left:1275px;top:540.2px;width:80px;height:10.799999999999955px;line-height:10.799999999999955px;text-align:center;white-space:nowrap;overflow:hidden;font-size:7.05px;color:#3a3a3a">0</div>
<div class="a" style="left:193.2px;top:551.0px;width:94.80000000000001px;height:10.799999999999955px;line-height:10.799999999999955px;text-align:left;white-space:nowrap;overflow:hidden;font-size:7.05px;color:#3a3a3a">Rigacar</div>
<div class="a" style="left:288.5px;top:551.0px;width:93.5px;height:10.799999999999955px;line-height:10.799999999999955px;text-align:left;white-space:nowrap;overflow:hidden;font-size:7.05px;color:#3a3a3a">Vehicle, Gasoline or Petrol</div>
<div class="a" style="left:383px;top:551.0px;width:75.39999999999998px;height:10.799999999999955px;line-height:10.799999999999955px;text-align:center;white-space:nowrap;overflow:hidden;font-size:7.05px;color:#3a3a3a">0.00</div>
<div class="a" style="left:458.4px;top:551.0px;width:77.10000000000002px;height:10.799999999999955px;line-height:10.799999999999955px;text-align:center;white-space:nowrap;overflow:hidden;font-size:7.05px;color:#3a3a3a">-</div>
<div class="a" style="left:535.5px;top:551.0px;width:95.89999999999998px;height:10.799999999999955px;line-height:10.799999999999955px;text-align:center;white-space:nowrap;overflow:hidden;font-size:7.4px;color:#3a3a3a">No Activity</div>
<div class="a" style="left:631.4px;top:551.0px;width:80.0px;height:10.799999999999955px;line-height:10.799999999999955px;text-align:center;white-space:nowrap;overflow:hidden;font-size:7.05px;color:#3a3a3a">-</div>
<div class="a" style="left:711.4px;top:551.0px;width:80.80000000000007px;height:10.799999999999955px;line-height:10.799999999999955px;text-align:center;white-space:nowrap;overflow:hidden;font-size:7.05px;color:#3a3a3a">-</div>
<div class="a" style="left:792.2px;top:551.0px;width:80.39999999999998px;height:10.799999999999955px;line-height:10.799999999999955px;text-align:center;white-space:nowrap;overflow:hidden;font-size:7.05px;color:#3a3a3a">-</div>
<div class="a" style="left:872.6px;top:551.0px;width:80.69999999999993px;height:10.799999999999955px;line-height:10.799999999999955px;text-align:center;white-space:nowrap;overflow:hidden;font-size:7.05px;color:#3a3a3a">-</div>
<div class="a" style="left:953.3px;top:551.0px;width:79.90000000000009px;height:10.799999999999955px;line-height:10.799999999999955px;text-align:center;white-space:nowrap;overflow:hidden;font-size:7.05px;color:#3a3a3a">-</div>
<div class="a" style="left:1033.2px;top:551.0px;width:80.89999999999986px;height:10.799999999999955px;line-height:10.799999999999955px;text-align:center;white-space:nowrap;overflow:hidden;font-size:7.05px;color:#3a3a3a">-</div>
<div class="a" style="left:1114.1px;top:551.0px;width:80.70000000000005px;height:10.799999999999955px;line-height:10.799999999999955px;text-align:center;white-space:nowrap;overflow:hidden;font-size:7.05px;color:#3a3a3a">0</div>
<div class="a" style="left:1194.8px;top:551.0px;width:80.20000000000005px;height:10.799999999999955px;line-height:10.799999999999955px;text-align:center;white-space:nowrap;overflow:hidden;font-size:7.05px;color:#3a3a3a">0</div>
<div class="a" style="left:1275px;top:551.0px;width:80px;height:10.799999999999955px;line-height:10.799999999999955px;text-align:center;white-space:nowrap;overflow:hidden;font-size:7.05px;color:#3a3a3a">0</div>
<div class="a" style="left:193.2px;top:561.8px;width:94.80000000000001px;height:10.799999999999955px;line-height:10.799999999999955px;text-align:left;white-space:nowrap;overflow:hidden;font-size:7.05px;color:#3a3a3a">Volkswagen Polo (2018)</div>
<div class="a" style="left:288.5px;top:561.8px;width:93.5px;height:10.799999999999955px;line-height:10.799999999999955px;text-align:left;white-space:nowrap;overflow:hidden;font-size:7.05px;color:#3a3a3a">Vehicle, Gasoline or Petrol</div>
<div class="a" style="left:383px;top:561.8px;width:75.39999999999998px;height:10.799999999999955px;line-height:10.799999999999955px;text-align:center;white-space:nowrap;overflow:hidden;font-size:7.05px;color:#3a3a3a">0.00</div>
<div class="a" style="left:458.4px;top:561.8px;width:77.10000000000002px;height:10.799999999999955px;line-height:10.799999999999955px;text-align:center;white-space:nowrap;overflow:hidden;font-size:7.05px;color:#3a3a3a">-</div>
<div class="a" style="left:535.5px;top:561.8px;width:95.89999999999998px;height:10.799999999999955px;line-height:10.799999999999955px;text-align:center;white-space:nowrap;overflow:hidden;font-size:7.4px;color:#3a3a3a">No Activity</div>
<div class="a" style="left:631.4px;top:561.8px;width:80.0px;height:10.799999999999955px;line-height:10.799999999999955px;text-align:center;white-space:nowrap;overflow:hidden;font-size:7.05px;color:#3a3a3a">-</div>
<div class="a" style="left:711.4px;top:561.8px;width:80.80000000000007px;height:10.799999999999955px;line-height:10.799999999999955px;text-align:center;white-space:nowrap;overflow:hidden;font-size:7.05px;color:#3a3a3a">-</div>
<div class="a" style="left:792.2px;top:561.8px;width:80.39999999999998px;height:10.799999999999955px;line-height:10.799999999999955px;text-align:center;white-space:nowrap;overflow:hidden;font-size:7.05px;color:#3a3a3a">-</div>
<div class="a" style="left:872.6px;top:561.8px;width:80.69999999999993px;height:10.799999999999955px;line-height:10.799999999999955px;text-align:center;white-space:nowrap;overflow:hidden;font-size:7.05px;color:#3a3a3a">-</div>
<div class="a" style="left:953.3px;top:561.8px;width:79.90000000000009px;height:10.799999999999955px;line-height:10.799999999999955px;text-align:center;white-space:nowrap;overflow:hidden;font-size:7.05px;color:#3a3a3a">-</div>
<div class="a" style="left:1033.2px;top:561.8px;width:80.89999999999986px;height:10.799999999999955px;line-height:10.799999999999955px;text-align:center;white-space:nowrap;overflow:hidden;font-size:7.05px;color:#3a3a3a">-</div>
<div class="a" style="left:1114.1px;top:561.8px;width:80.70000000000005px;height:10.799999999999955px;line-height:10.799999999999955px;text-align:center;white-space:nowrap;overflow:hidden;font-size:7.05px;color:#3a3a3a">0</div>
<div class="a" style="left:1194.8px;top:561.8px;width:80.20000000000005px;height:10.799999999999955px;line-height:10.799999999999955px;text-align:center;white-space:nowrap;overflow:hidden;font-size:7.05px;color:#3a3a3a">0</div>
<div class="a" style="left:1275px;top:561.8px;width:80px;height:10.799999999999955px;line-height:10.799999999999955px;text-align:center;white-space:nowrap;overflow:hidden;font-size:7.05px;color:#3a3a3a">0</div>
<div class="a" style="left:1344px;top:330px;width:1px;height:242.60000000000002px;background:#fff"></div>
</body></html>
